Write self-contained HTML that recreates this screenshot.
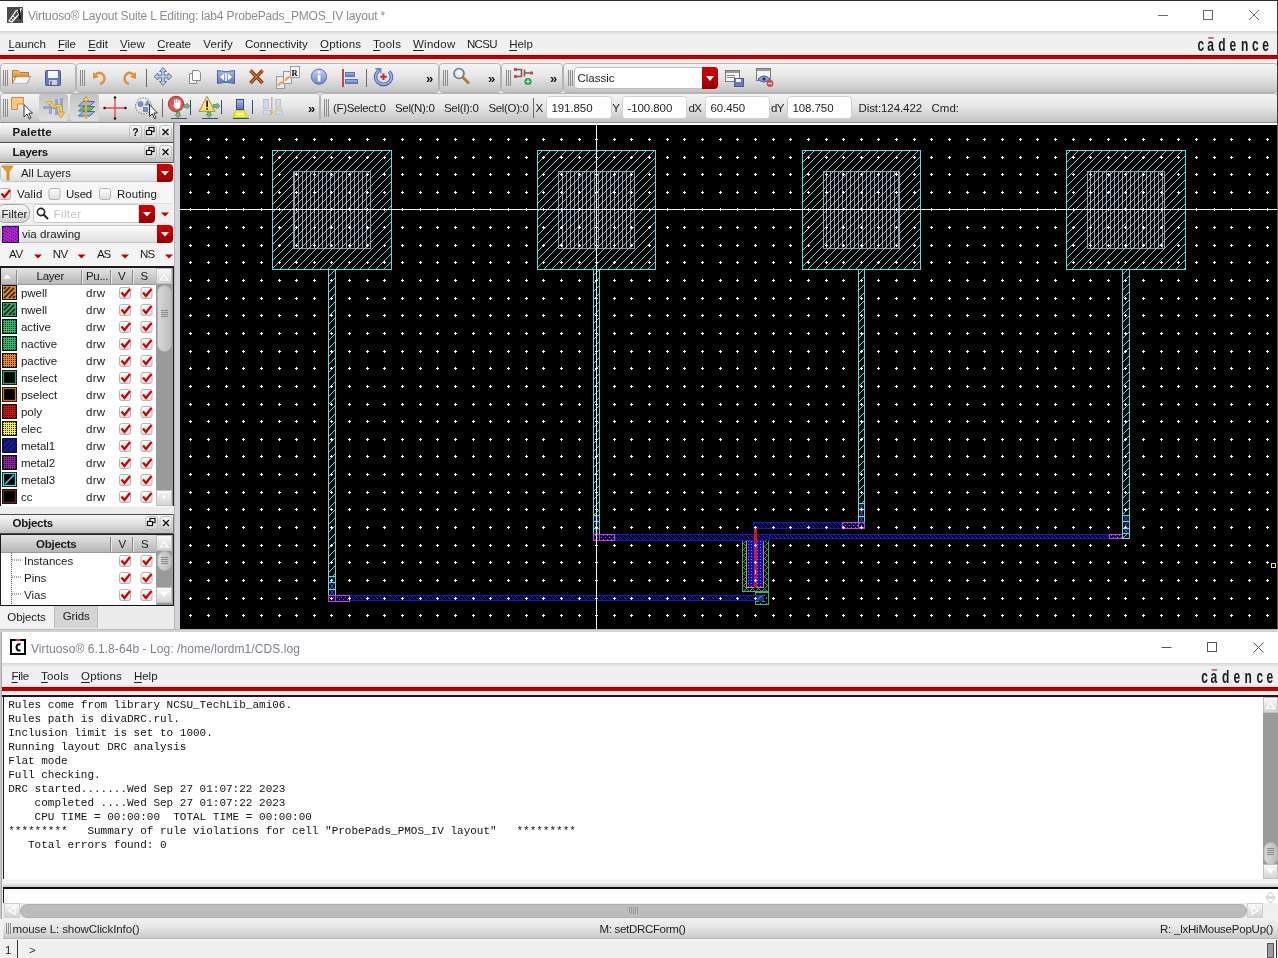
<!DOCTYPE html>
<html><head><meta charset="utf-8"><title>Virtuoso Layout</title>
<style>html,body{margin:0;padding:0;background:#f0f0f0;overflow:hidden;width:1278px;height:958px;font-family:"Liberation Sans",sans-serif}
svg{display:block;will-change:transform}</style></head>
<body><svg width="1278" height="958" viewBox="0 0 1278 958">
<defs>
<linearGradient id="gTB" x1="0" y1="0" x2="0" y2="1">
 <stop offset="0" stop-color="#f4f4f4"/><stop offset="0.45" stop-color="#e6e6e6"/><stop offset="1" stop-color="#c2c2c2"/>
</linearGradient>
<linearGradient id="gHdr" x1="0" y1="0" x2="0" y2="1">
 <stop offset="0" stop-color="#f8f8f8"/><stop offset="0.5" stop-color="#e2e2e2"/><stop offset="1" stop-color="#bdbdbd"/>
</linearGradient>
<linearGradient id="gTH" x1="0" y1="0" x2="0" y2="1">
 <stop offset="0" stop-color="#e4e4e4"/><stop offset="1" stop-color="#b4b4b4"/>
</linearGradient>
<linearGradient id="gCombo" x1="0" y1="0" x2="0" y2="1">
 <stop offset="0" stop-color="#fcfcfc"/><stop offset="1" stop-color="#dedede"/>
</linearGradient>
<linearGradient id="gRed" x1="0" y1="0" x2="0" y2="1">
 <stop offset="0" stop-color="#d40000"/><stop offset="1" stop-color="#960000"/>
</linearGradient>
<linearGradient id="gBtn" x1="0" y1="0" x2="0" y2="1">
 <stop offset="0" stop-color="#fafafa"/><stop offset="1" stop-color="#d2d2d2"/>
</linearGradient>
<linearGradient id="gScroll" x1="0" y1="0" x2="1" y2="0">
 <stop offset="0" stop-color="#d8d8d8"/><stop offset="1" stop-color="#bcbcbc"/>
</linearGradient>
<linearGradient id="gStat" x1="0" y1="0" x2="0" y2="1">
 <stop offset="0" stop-color="#f2f2f2"/><stop offset="0.5" stop-color="#e4e4e4"/><stop offset="1" stop-color="#c6c6c6"/>
</linearGradient>
<linearGradient id="gSplit" x1="0" y1="0" x2="0" y2="1">
 <stop offset="0" stop-color="#e8e8e8"/><stop offset="0.4" stop-color="#fafafa"/><stop offset="1" stop-color="#c8c8c8"/>
</linearGradient>
<linearGradient id="gCheck" x1="0" y1="0" x2="0" y2="1">
 <stop offset="0" stop-color="#ffffff"/><stop offset="1" stop-color="#dcdcdc"/>
</linearGradient>
</defs>
<rect x="0" y="0" width="1278" height="958" fill="#f0f0f0"/>
<rect x="0" y="0" width="1278" height="31" fill="#ffffff"/>
<rect x="0" y="0" width="1278" height="1" fill="#2a2a2a"/>
<rect x="0" y="31" width="1278" height="1" fill="#d6d6d6"/>
<g transform="translate(7,7)"><rect width="16" height="16" fill="#4a4a4a"/><path d="M2 14 L9 4 L14 2 L12 7 L5 15 Z" fill="none" stroke="#fff" stroke-width="1.3"/><path d="M6 9 l3 3 M4 11 l2 2 M10 5 l1 1" stroke="#fff" stroke-width="1"/><path d="M12 2 l1 10" stroke="#000" stroke-width="1.5"/></g>
<text x="28.00" y="20.00" font-family="Liberation Sans" font-size="12.00" fill="#8a8a96" letter-spacing="-0.165">Virtuoso® Layout Suite L Editing: lab4 ProbePads_PMOS_IV layout *</text>
<path d="M1158 15.5 H1168" stroke="#6a6a6a" stroke-width="1"/>
<rect x="1203.5" y="10.5" width="9" height="9" fill="none" stroke="#6a6a6a" stroke-width="1"/>
<path d="M1249 10 L1259 20 M1259 10 L1249 20" stroke="#6a6a6a" stroke-width="1"/>
<rect x="0" y="32" width="1278" height="22" fill="#f0f0f0"/>
<rect x="0" y="32" width="1278" height="2" fill="#e2e2e2"/>
<rect x="0" y="53" width="1278" height="2" fill="#fbe4e4"/>
<rect x="0" y="55" width="1278" height="1" fill="#9a0000"/>
<rect x="0" y="56" width="1278" height="3" fill="#c00000"/>
<rect x="0" y="59" width="1278" height="2" fill="#fbe4e4"/>
<text x="8.40" y="48.00" font-family="Liberation Sans" font-size="11.50" fill="#1e1e1e" letter-spacing="-0.055">Launch</text>
<rect x="8.4" y="50" width="5.8" height="1" fill="#1e1e1e"/>
<text x="58.00" y="48.00" font-family="Liberation Sans" font-size="11.50" fill="#1e1e1e" letter-spacing="-0.233">File</text>
<rect x="58.0" y="50" width="6.2" height="1" fill="#1e1e1e"/>
<text x="88.20" y="48.00" font-family="Liberation Sans" font-size="11.50" fill="#1e1e1e" letter-spacing="-0.029">Edit</text>
<rect x="88.2" y="50" width="7.1" height="1" fill="#1e1e1e"/>
<text x="120.00" y="48.00" font-family="Liberation Sans" font-size="11.50" fill="#1e1e1e" letter-spacing="0.045">View</text>
<rect x="120.0" y="50" width="7.2" height="1" fill="#1e1e1e"/>
<text x="157.30" y="48.00" font-family="Liberation Sans" font-size="11.50" fill="#1e1e1e" letter-spacing="-0.170">Create</text>
<rect x="157.3" y="50" width="7.6" height="1" fill="#1e1e1e"/>
<text x="203.20" y="48.00" font-family="Liberation Sans" font-size="11.50" fill="#1e1e1e" letter-spacing="0.173">Verify</text>
<rect x="221.1" y="50" width="4.0" height="1" fill="#1e1e1e"/>
<text x="245.00" y="48.00" font-family="Liberation Sans" font-size="11.50" fill="#1e1e1e" letter-spacing="0.013">Connectivity</text>
<rect x="259.7" y="50" width="5.9" height="1" fill="#1e1e1e"/>
<text x="320.00" y="48.00" font-family="Liberation Sans" font-size="11.50" fill="#1e1e1e" letter-spacing="0.238">Options</text>
<rect x="320.0" y="50" width="8.8" height="1" fill="#1e1e1e"/>
<text x="373.00" y="48.00" font-family="Liberation Sans" font-size="11.50" fill="#1e1e1e" letter-spacing="0.271">Tools</text>
<rect x="373.0" y="50" width="6.9" height="1" fill="#1e1e1e"/>
<text x="413.00" y="48.00" font-family="Liberation Sans" font-size="11.50" fill="#1e1e1e" letter-spacing="0.266">Window</text>
<rect x="413.0" y="50" width="10.8" height="1" fill="#1e1e1e"/>
<text x="467.00" y="48.00" font-family="Liberation Sans" font-size="11.50" fill="#1e1e1e" letter-spacing="-0.697">NCSU</text>
<text x="509.20" y="48.00" font-family="Liberation Sans" font-size="11.50" fill="#1e1e1e" letter-spacing="-0.013">Help</text>
<rect x="509.2" y="50" width="7.8" height="1" fill="#1e1e1e"/>
<text transform="translate(1197.50,50.60) scale(0.66,1)" font-family="Liberation Sans" font-weight="bold" font-size="18.2" fill="#1c1c1c">c</text>
<text transform="translate(1207.20,50.60) scale(0.66,1)" font-family="Liberation Sans" font-weight="bold" font-size="18.2" fill="#1c1c1c">a</text>
<text transform="translate(1218.20,50.60) scale(0.66,1)" font-family="Liberation Sans" font-weight="bold" font-size="18.2" fill="#1c1c1c">d</text>
<text transform="translate(1229.60,50.60) scale(0.66,1)" font-family="Liberation Sans" font-weight="bold" font-size="18.2" fill="#1c1c1c">e</text>
<text transform="translate(1240.90,50.60) scale(0.66,1)" font-family="Liberation Sans" font-weight="bold" font-size="18.2" fill="#1c1c1c">n</text>
<text transform="translate(1251.90,50.60) scale(0.66,1)" font-family="Liberation Sans" font-weight="bold" font-size="18.2" fill="#1c1c1c">c</text>
<text transform="translate(1262.30,50.60) scale(0.66,1)" font-family="Liberation Sans" font-weight="bold" font-size="18.2" fill="#1c1c1c">e</text>
<rect x="1208.2" y="37.2" width="5.5" height="1.4" fill="#b84848"/>
<rect x="0" y="61" width="1278" height="2" fill="#f0f0f0"/>
<rect x="0.5" y="63.5" width="75" height="29" rx="3" fill="url(#gTB)" stroke="#b4b4b4" stroke-width="1"/>
<rect x="76.5" y="63.5" width="362" height="29" rx="3" fill="url(#gTB)" stroke="#b4b4b4" stroke-width="1"/>
<rect x="439.5" y="63.5" width="61" height="29" rx="3" fill="url(#gTB)" stroke="#b4b4b4" stroke-width="1"/>
<rect x="501.5" y="63.5" width="61" height="29" rx="3" fill="url(#gTB)" stroke="#b4b4b4" stroke-width="1"/>
<rect x="563.5" y="63.5" width="714" height="29" rx="3" fill="url(#gTB)" stroke="#b4b4b4" stroke-width="1"/>
<path d="M3.5 70 V86" stroke="#8c8c8c" stroke-width="1"/>
<path d="M5.5 70 V86" stroke="#8c8c8c" stroke-width="1"/>
<path d="M7.5 70 V86" stroke="#8c8c8c" stroke-width="1"/>
<path d="M80.5 70 V86" stroke="#8c8c8c" stroke-width="1"/>
<path d="M82.5 70 V86" stroke="#8c8c8c" stroke-width="1"/>
<path d="M84.5 70 V86" stroke="#8c8c8c" stroke-width="1"/>
<path d="M443.5 70 V86" stroke="#8c8c8c" stroke-width="1"/>
<path d="M445.5 70 V86" stroke="#8c8c8c" stroke-width="1"/>
<path d="M447.5 70 V86" stroke="#8c8c8c" stroke-width="1"/>
<path d="M506.5 70 V86" stroke="#8c8c8c" stroke-width="1"/>
<path d="M508.5 70 V86" stroke="#8c8c8c" stroke-width="1"/>
<path d="M510.5 70 V86" stroke="#8c8c8c" stroke-width="1"/>
<path d="M568.5 70 V86" stroke="#8c8c8c" stroke-width="1"/>
<path d="M570.5 70 V86" stroke="#8c8c8c" stroke-width="1"/>
<path d="M572.5 70 V86" stroke="#8c8c8c" stroke-width="1"/>
<rect x="0.5" y="93.5" width="319" height="29" rx="3" fill="url(#gTB)" stroke="#b4b4b4" stroke-width="1"/>
<rect x="320.5" y="93.5" width="957" height="29" rx="3" fill="url(#gTB)" stroke="#b4b4b4" stroke-width="1"/>
<path d="M3.5 99 V117" stroke="#8c8c8c" stroke-width="1"/>
<path d="M5.5 99 V117" stroke="#8c8c8c" stroke-width="1"/>
<path d="M7.5 99 V117" stroke="#8c8c8c" stroke-width="1"/>
<path d="M324.5 99 V117" stroke="#8c8c8c" stroke-width="1"/>
<path d="M326.5 99 V117" stroke="#8c8c8c" stroke-width="1"/>
<path d="M328.5 99 V117" stroke="#8c8c8c" stroke-width="1"/>
<rect x="0" y="122" width="1278" height="1" fill="#8e8e8e"/>
<defs>
<linearGradient id="gFold" x1="0" y1="0" x2="0" y2="1"><stop offset="0" stop-color="#f6c27a"/><stop offset="1" stop-color="#d88a30"/></linearGradient>
<linearGradient id="gBlueI" x1="0" y1="0" x2="0" y2="1"><stop offset="0" stop-color="#c8d4f4"/><stop offset="1" stop-color="#6a80c8"/></linearGradient>
<linearGradient id="gBlueB" x1="0" y1="0" x2="0" y2="1"><stop offset="0" stop-color="#a8bce8"/><stop offset="1" stop-color="#5a74b8"/></linearGradient>
<linearGradient id="gWarn" x1="0" y1="0" x2="0" y2="1"><stop offset="0" stop-color="#fff8d0"/><stop offset="1" stop-color="#f0d860"/></linearGradient>
<linearGradient id="gHL" x1="0" y1="0" x2="0" y2="1"><stop offset="0" stop-color="#c4c4c4"/><stop offset="1" stop-color="#dedede"/></linearGradient>
</defs>
<path d="M12.5 70.5 H18 L20 72.5 H28.5 V77 H12.5 Z" fill="url(#gFold)" stroke="#c07a28" stroke-width="1"/>
<path d="M12.5 83.5 V72 M12.5 83.5 L16 76.5 H30.5 L27 83.5 Z" fill="#f8f8f8" stroke="#c07a28" stroke-width="1"/>
<path d="M13 83.5 L16.5 77 H30 L26.5 83.5 Z" fill="#f4f4f4" stroke="#bcbcbc" stroke-width="0.8"/>
<rect x="45.5" y="70.5" width="15" height="15" rx="1" fill="#6a7cb4" stroke="#4a5a90"/>
<rect x="48" y="71" width="10" height="7" fill="#f4f6fa"/>
<rect x="49" y="80" width="8" height="5" fill="#c8d0e4"/>
<rect x="50" y="81" width="2" height="4" fill="#6a7cb4"/>
<path d="M95 75 Q100 70 104 76 Q106 82 100 84" fill="none" stroke="#e09040" stroke-width="2.4"/>
<path d="M93 72 L93 79 L99 77 Z" fill="#e09040"/>
<path d="M134 75 Q129 70 125 76 Q123 82 129 84" fill="none" stroke="#e09040" stroke-width="2.4"/>
<path d="M136 72 L136 79 L130 77 Z" fill="#e09040"/>
<path d="M146.5 69 V87" stroke="#6a6a6a" stroke-width="1"/>
<path d="M163 67.5 L166.5 71.5 H164.3 V75.2 H168 V73 L172 76.5 L168 80 V77.8 H164.3 V81.5 H166.5 L163 85.5 L159.5 81.5 H161.7 V77.8 H158 V80 L154 76.5 L158 73 V75.2 H161.7 V71.5 H159.5 Z" fill="#b8d0ea" stroke="#5a7898" stroke-width="1"/>
<path d="M189.5 73.5 H196.5 V83.5 H189.5 Z" fill="#fafafa" stroke="#8a8a8a"/>
<path d="M192.5 70.5 H198.5 L200.5 72.5 V80.5 H192.5 Z" fill="#fafafa" stroke="#8a8a8a"/>
<path d="M217.5 70.5 Q226 73 234.5 70.5 V83.5 Q226 81 217.5 83.5 Z" fill="url(#gBlueB)" stroke="#4a64a8"/>
<path d="M224 73.5 L220 77 L224 80.5 Z M228 73.5 L232 77 L228 80.5 Z" fill="#fff"/>
<rect x="225" y="73" width="2" height="8" fill="#e8eef8"/>
<path d="M250.5 70.5 L262.5 83 M262.5 70.5 L250.5 83" stroke="#7a3410" stroke-width="3.4"/>
<path d="M250.5 70.5 L262.5 83 M262.5 70.5 L250.5 83" stroke="#d8702a" stroke-width="1.3"/>
<rect x="276.5" y="76.5" width="8" height="12" fill="#eaeaea" stroke="#9a9a9a"/>
<rect x="283.5" y="71.5" width="8" height="12" fill="#eeeeee" stroke="#9a9a9a"/>
<rect x="290.5" y="66.5" width="9" height="11" fill="#f6f6f6" stroke="#9a9a9a"/>
<path d="M278 86 Q280 82 284 82 M285 81 Q287 77 291 77" fill="none" stroke="#e8a050" stroke-width="1.8"/>
<text x="291.50" y="76.00" font-family="Liberation Serif" font-size="8.50" fill="#000" font-weight="bold">R</text>
<circle cx="319" cy="76.7" r="7.6" fill="url(#gBlueI)" stroke="#5a70b8" stroke-width="1"/>
<rect x="317.8" y="75" width="2.6" height="6.5" fill="#fff"/><circle cx="319.1" cy="72.4" r="1.4" fill="#fff"/>
<rect x="342" y="69" width="2" height="18" fill="#c04848"/>
<rect x="345.5" y="72.5" width="9" height="4" fill="url(#gBlueB)" stroke="#5a74b8" stroke-width="1"/>
<rect x="345.5" y="79.5" width="12" height="4" fill="url(#gBlueB)" stroke="#5a74b8" stroke-width="1"/>
<path d="M366.5 69 V87" stroke="#6a6a6a" stroke-width="1"/>
<path d="M378 71.5 A8 7.5 0 1 0 389 71.5" fill="none" stroke="#3a5aa8" stroke-width="3.6"/>
<path d="M378 71.5 A8 7.5 0 1 0 389 71.5" fill="none" stroke="#9ab4e8" stroke-width="1.8"/>
<path d="M374.5 68 H381.5 V74 Z" fill="#6a88d0"/>
<path d="M383.5 73.5 V80 M380.2 76.8 H386.8" stroke="#e02020" stroke-width="2"/>
<text x="426.00" y="83.00" font-family="Liberation Sans" font-size="13.00" fill="#111" font-weight="bold">»</text>
<circle cx="459" cy="73.5" r="5" fill="#dce8f8" stroke="#6a7890" stroke-width="1.6"/>
<path d="M456.5 73.5 H461.5 M459 71 V76" stroke="#fff" stroke-width="1.6"/>
<path d="M462.5 77 L469 83.5" stroke="#b0782a" stroke-width="2.6"/>
<text x="488.00" y="83.00" font-family="Liberation Sans" font-size="13.00" fill="#111" font-weight="bold">»</text>
<path d="M516 69.5 H521.5 V73.5 M516 76.5 H521.5 V72.5 M524.5 69.5 V76.5 M524.5 73 H531" fill="none" stroke="#7a5a5a" stroke-width="1.6"/>
<rect x="514" y="68" width="3" height="3" fill="#d04848"/><rect x="514" y="75" width="3" height="3" fill="#d04848"/><rect x="530" y="71.5" width="3" height="3" fill="#d04848"/>
<circle cx="528" cy="81.5" r="3.6" fill="#28a040"/><path d="M526 81.5 H530 M528 79.5 V83.5" stroke="#fff" stroke-width="1.2"/>
<text x="550.00" y="83.00" font-family="Liberation Sans" font-size="13.00" fill="#111" font-weight="bold">»</text>
<rect x="725.5" y="70.5" width="14" height="11" fill="#f4f4f4" stroke="#7a7a7a"/>
<rect x="726" y="71" width="13" height="2" fill="#9a9a9a"/>
<rect x="727" y="75" width="8" height="1" fill="#8a8a8a"/>
<rect x="727" y="77" width="8" height="1" fill="#8a8a8a"/>
<rect x="734.5" y="78.5" width="9" height="8" fill="#6a7cb4" stroke="#4a5a90"/>
<rect x="736" y="79" width="5" height="3" fill="#f0f0f0"/>
<rect x="756.5" y="68.5" width="14" height="12" fill="#f4f4f4" stroke="#7a7a7a"/>
<rect x="757" y="69" width="13" height="2" fill="#9a9a9a"/>
<path d="M758 79 Q764 73 770 79 Q764 85 758 79 Z" fill="#8aa0d8" stroke="#3a5aa8" stroke-width="1"/>
<circle cx="764" cy="79" r="1.6" fill="#203060"/>
<circle cx="770" cy="83.5" r="3.4" fill="#e04848"/><path d="M768.2 83.5 H771.8" stroke="#fff" stroke-width="1.2"/>
<path d="M11.5 97.5 H23.5 V104 H17.5 V109.5 H11.5 Z" fill="#f8c880" stroke="#d08a30" stroke-width="1"/>
<path d="M24 104.5 V117 L27 114 L29.5 119 L31 118 L28.8 113.2 H32.5 Z" fill="#fff" stroke="#222" stroke-width="0.9"/>
<rect x="39" y="94" width="29" height="27" rx="3" fill="url(#gHL)"/>
<rect x="70" y="94" width="29" height="27" rx="3" fill="url(#gHL)"/>
<path d="M43 107.5 H57" stroke="#8ea6d8" stroke-width="3"/>
<rect x="49" y="101" width="3" height="13" fill="#8ea6d8"/>
<rect x="55" y="99" width="3" height="16" fill="#8ea6d8"/>
<rect x="60" y="98" width="3" height="17" fill="#8ea6d8"/>
<path d="M47 104 Q49 101 51 104 Q53 108 57 106 Q61 104 61 109 V113" fill="none" stroke="#c89020" stroke-width="3.2"/>
<path d="M47 104 Q49 101 51 104 Q53 108 57 106 Q61 104 61 109 V113" fill="none" stroke="#f8d060" stroke-width="1.8"/>
<path d="M57.5 112 L61 118 L64.5 112 Z" fill="#f8d060" stroke="#c89020" stroke-width="0.8"/>
<path d="M78.5 106 L83 101.5 H94.5 L90 106 Z" fill="#9ab4e8" stroke="#4a64a8"/>
<path d="M78.5 111 L83 106.5 H94.5 L90 111 Z" fill="#6ab870" stroke="#3a8a48"/>
<path d="M78.5 116 L83 111.5 H94.5 L90 116 Z" fill="#9ab4e8" stroke="#4a64a8"/>
<path d="M86 99 V119" stroke="#c89020" stroke-width="2.2"/><path d="M86 99 V119" stroke="#f8d060" stroke-width="1"/>
<path d="M83 101 L86 96.5 L89 101 Z" fill="#f8d060" stroke="#c89020" stroke-width="0.8"/>
<path d="M104 108 H126 M115 97 V119" stroke="#e84848" stroke-width="1.4"/>
<circle cx="104.5" cy="108" r="1.2" fill="#111"/>
<circle cx="125.5" cy="108" r="1.2" fill="#111"/>
<circle cx="115" cy="97.5" r="1.2" fill="#111"/>
<circle cx="115" cy="118.5" r="1.2" fill="#111"/>
<circle cx="143.5" cy="106" r="8" fill="none" stroke="#777" stroke-width="1" stroke-dasharray="1.6 1.2"/>
<circle cx="140.5" cy="104" r="2.6" fill="#7a94d8" stroke="#4a64a8" stroke-width="0.6"/>
<path d="M145 105 L147.5 100.5 L150 105 Z" fill="#7a94d8" stroke="#4a64a8" stroke-width="0.6"/>
<rect x="143.5" y="107.5" width="4" height="4" fill="#7a94d8" stroke="#4a64a8" stroke-width="0.6"/>
<path d="M149.5 104.5 V116.5 L152.3 113.8 L154.5 118.8 L156 118 L153.8 113 H157.3 Z" fill="#fff" stroke="#222" stroke-width="0.9"/>
<path d="M162.5 99 V117" stroke="#6a6a6a" stroke-width="1"/>
<circle cx="176" cy="104" r="7.6" fill="#d45a5a" stroke="#b84040" stroke-width="1.2"/>
<path d="M174.6 103 V100.2 M176.4 103 V99.4 M178.2 103 V99.8 M179.8 103.5 V101" stroke="#fff" stroke-width="1.3" stroke-linecap="round" fill="none"/>
<path d="M172.8 104.2 L174.2 106 V103 H180.4 V106 Q180.2 109 177 109 Q174.4 109 172.8 104.2 Z" fill="#fff"/>
<path d="M184 104.5 H187 V103 L190 106 L187 109 V107.5 H184 Z" fill="#6ac070" stroke="#3a8a48" stroke-width="0.6"/>
<path d="M176.5 112 V115 H175 L178 118 L181 115 H179.5 V112 Z" fill="#6ac070" stroke="#3a8a48" stroke-width="0.6"/>
<rect x="171" y="118" width="16" height="1" fill="#3a4a78"/>
<rect x="190" y="100" width="1" height="15" fill="#3a4a78"/>
<path d="M207 96.5 L215 111.5 H199 Z" fill="url(#gWarn)" stroke="#c8904a" stroke-width="1.1" stroke-linejoin="round"/>
<rect x="206.3" y="100.5" width="1.6" height="6.5" fill="#111"/>
<rect x="206.3" y="108.2" width="1.6" height="1.6" fill="#111"/>
<path d="M213 104.5 H217 V103 L220 106 L217 109 V107.5 H213 Z" fill="#6ac070" stroke="#3a8a48" stroke-width="0.6"/>
<path d="M207.5 112 V114.5 H206 L209 117.5 L212 114.5 H210.5 V112 Z" fill="#6ac070" stroke="#3a8a48" stroke-width="0.6"/>
<rect x="202" y="118" width="16" height="1" fill="#3a4a78"/>
<rect x="221" y="100" width="1" height="14" fill="#3a4a78"/>
<rect x="236.5" y="99.5" width="7" height="10" fill="url(#gBlueB)" stroke="#3a4a88"/>
<path d="M235.5 110.5 H244.5 L247 117.5 H233 Z" fill="#f0f030" stroke="#c8c020" stroke-width="0.8"/>
<rect x="237" y="113" width="6" height="2" fill="#f8f8b8"/>
<rect x="233" y="118" width="16" height="1" fill="#3a4a78"/>
<rect x="252" y="100" width="1" height="14" fill="#3a4a78"/>
<rect x="263.5" y="99.5" width="5" height="9" fill="#d0d8e8" stroke="#b8c4d8"/><rect x="275.5" y="99.5" width="5" height="9" fill="#d0d8e8" stroke="#b8c4d8"/>
<rect x="263.5" y="110.5" width="7" height="4" fill="#d0d8e8" stroke="#b8c4d8"/><rect x="275.5" y="110.5" width="7" height="4" fill="#d0d8e8" stroke="#b8c4d8"/>
<rect x="271" y="97" width="1.5" height="20" fill="#d8a8a8"/>
<path d="M270 118 L281 106" stroke="#c8a878" stroke-width="2.4"/><path d="M270 118 L281 106" stroke="#f0e0b8" stroke-width="1.2"/>
<text x="308.00" y="113.00" font-family="Liberation Sans" font-size="13.00" fill="#111" font-weight="bold">»</text>
<text x="333.00" y="112.00" font-family="Liberation Sans" font-size="11.50" fill="#1e1e1e" letter-spacing="-0.340">(F)Select:0</text>
<text x="395.00" y="112.00" font-family="Liberation Sans" font-size="11.50" fill="#1e1e1e" letter-spacing="-0.335">Sel(N):0</text>
<text x="444.00" y="112.00" font-family="Liberation Sans" font-size="11.50" fill="#1e1e1e" letter-spacing="-0.321">Sel(I):0</text>
<text x="488.50" y="112.00" font-family="Liberation Sans" font-size="11.50" fill="#1e1e1e" letter-spacing="-0.352">Sel(O):0</text>
<text x="535.50" y="112.00" font-family="Liberation Sans" font-size="11.50" fill="#1e1e1e">X</text>
<text x="612.20" y="112.00" font-family="Liberation Sans" font-size="11.50" fill="#1e1e1e">Y</text>
<text x="688.50" y="112.00" font-family="Liberation Sans" font-size="11.50" fill="#1e1e1e" letter-spacing="-0.533">dX</text>
<text x="771.00" y="112.00" font-family="Liberation Sans" font-size="11.50" fill="#1e1e1e" letter-spacing="-0.533">dY</text>
<text x="858.50" y="112.00" font-family="Liberation Sans" font-size="11.50" fill="#1e1e1e" letter-spacing="-0.089">Dist:124.422</text>
<text x="931.50" y="112.00" font-family="Liberation Sans" font-size="11.50" fill="#1e1e1e" letter-spacing="0.006">Cmd:</text>
<path d="M533.5 98 V118" stroke="#6a6a6a" stroke-width="1"/>
<rect x="546.5" y="96.5" width="65" height="22" rx="3" fill="#ffffff" stroke="#cfcfcf"/>
<text x="551.50" y="112.00" font-family="Liberation Sans" font-size="11.50" fill="#1e1e1e" letter-spacing="-0.089">191.850</text>
<rect x="622.5" y="96.5" width="64" height="22" rx="3" fill="#ffffff" stroke="#cfcfcf"/>
<text x="627.50" y="112.00" font-family="Liberation Sans" font-size="11.50" fill="#1e1e1e" letter-spacing="-0.085">-100.800</text>
<rect x="705.5" y="96.5" width="64" height="22" rx="3" fill="#ffffff" stroke="#cfcfcf"/>
<text x="710.50" y="112.00" font-family="Liberation Sans" font-size="11.50" fill="#1e1e1e" letter-spacing="-0.088">60.450</text>
<rect x="787.5" y="96.5" width="64" height="22" rx="3" fill="#ffffff" stroke="#cfcfcf"/>
<text x="792.50" y="112.00" font-family="Liberation Sans" font-size="11.50" fill="#1e1e1e" letter-spacing="-0.089">108.750</text>
<rect x="574.5" y="67.5" width="143" height="21" rx="3" fill="#ffffff" stroke="#bdbdbd"/>
<path d="M702 67 H714 Q718 67 718 71 V85 Q718 89 714 89 H702 Z" fill="url(#gRed)"/>
<path d="M706 76 L714 76 L710 81 Z" fill="#fff"/>
<text x="577.50" y="82.00" font-family="Liberation Sans" font-size="11.50" fill="#1e1e1e" letter-spacing="-0.009">Classic</text>
<rect x="0" y="123" width="174" height="506" fill="#f0f0f0"/>
<rect x="0" y="123" width="173" height="1" fill="#6a6a6a"/>
<rect x="0" y="123" width="173" height="19" fill="url(#gHdr)"/>
<rect x="0" y="142" width="173" height="1" fill="#4a4a4a"/>
<rect x="173" y="123" width="1" height="20" fill="#7a7a7a"/>
<text x="12.50" y="136.00" font-family="Liberation Sans" font-size="11.50" fill="#111" font-weight="bold" letter-spacing="0.255">Palette</text>
<rect x="129.5" y="125.5" width="12" height="13" rx="3" fill="url(#gBtn)" stroke="#bdbdbd"/>
<text x="135.50" y="136.00" font-family="Liberation Sans" font-size="10.50" fill="#111" font-weight="bold" text-anchor="middle">?</text>
<rect x="144.5" y="125.5" width="12" height="13" rx="3" fill="url(#gBtn)" stroke="#bdbdbd"/>
<rect x="149.0" y="127.5" width="5" height="4" fill="#fff" stroke="#111" stroke-width="1.2"/><rect x="146.5" y="130.5" width="5" height="4" fill="#fff" stroke="#111" stroke-width="1.2"/>
<rect x="159.5" y="125.5" width="12" height="13" rx="3" fill="url(#gBtn)" stroke="#bdbdbd"/>
<path d="M162.5 129.0 l6 6 M162.5 135.0 l6 -6" stroke="#111" stroke-width="1.4"/>
<rect x="0" y="143" width="173" height="19" fill="url(#gHdr)"/>
<rect x="0" y="162" width="173" height="1" fill="#4a4a4a"/>
<rect x="173" y="143" width="1" height="20" fill="#7a7a7a"/>
<text x="12.50" y="156.00" font-family="Liberation Sans" font-size="11.50" fill="#111" font-weight="bold" letter-spacing="-0.264">Layers</text>
<rect x="144.5" y="145.5" width="12" height="13" rx="3" fill="url(#gBtn)" stroke="#bdbdbd"/>
<rect x="149.0" y="147.5" width="5" height="4" fill="#fff" stroke="#111" stroke-width="1.2"/><rect x="146.5" y="150.5" width="5" height="4" fill="#fff" stroke="#111" stroke-width="1.2"/>
<rect x="159.5" y="145.5" width="12" height="13" rx="3" fill="url(#gBtn)" stroke="#bdbdbd"/>
<path d="M162.5 149.0 l6 6 M162.5 155.0 l6 -6" stroke="#111" stroke-width="1.4"/>
<rect x="0" y="163" width="173" height="21" fill="#f4f4f4"/>
<rect x="0.5" y="164.5" width="172.0" height="17.0" rx="4" fill="url(#gCombo)" stroke="#c4c4c4"/>
<path d="M157.0 164.0 H169.0 Q173.0 164.0 173.0 168.0 V178.0 Q173.0 182.0 169.0 182.0 H157.0 Z" fill="url(#gRed)"/>
<path d="M161.0 171.0 h8 l-4 4.5 z" fill="#fff"/>
<path d="M2 166 H13 L9 172 V180 H7 V172 Z" fill="#e89a20" stroke="#b06a10" stroke-width="0.6"/>
<text x="21.00" y="177.20" font-family="Liberation Sans" font-size="11.50" fill="#1e1e1e" letter-spacing="-0.049">All Layers</text>
<rect x="0" y="183" width="173" height="21" fill="#f6f6f6"/>
<rect x="0" y="203" width="173" height="1" fill="#dedede"/>
<rect x="-0.5" y="188.5" width="11" height="11" rx="2" fill="url(#gCheck)" stroke="#b4b4b4"/>
<path d="M1.5 193.5 l3 3.5 l5.5 -7" fill="none" stroke="#cc0000" stroke-width="2.2"/>
<text x="17.00" y="198.00" font-family="Liberation Sans" font-size="11.50" fill="#1a1a1a" letter-spacing="0.156">Valid</text>
<rect x="49.0" y="188.5" width="11" height="11" rx="2" fill="url(#gCheck)" stroke="#b4b4b4"/>
<text x="66.00" y="198.00" font-family="Liberation Sans" font-size="11.50" fill="#1a1a1a" letter-spacing="-0.212">Used</text>
<rect x="99.5" y="188.5" width="11" height="11" rx="2" fill="url(#gCheck)" stroke="#b4b4b4"/>
<text x="117.00" y="198.00" font-family="Liberation Sans" font-size="11.50" fill="#1a1a1a" letter-spacing="0.052">Routing</text>
<rect x="-3.5" y="204.5" width="33" height="18" rx="8" fill="url(#gBtn)" stroke="#a8a8a8"/>
<text x="1.50" y="218.00" font-family="Liberation Sans" font-size="11.50" fill="#1a1a1a" letter-spacing="0.074">Filter</text>
<path d="M33.5 207.5 Q33.5 204.5 36.5 204.5 H139 V222.5 H36.5 Q33.5 222.5 33.5 219.5 Z" fill="#fff" stroke="#c8c8c8"/>
<path d="M139 205 H151 Q155 205 155 209 V219 Q155 223 151 223 H139 Z" fill="url(#gRed)"/>
<path d="M143 212 h8 l-4 4.5 z" fill="#fff"/>
<circle cx="41" cy="212" r="3.6" fill="none" stroke="#222" stroke-width="1.6"/><path d="M43.5 214.5 L48 219" stroke="#222" stroke-width="2"/>
<text x="53.50" y="218.00" font-family="Liberation Sans" font-size="11.50" fill="#c4c4c4" letter-spacing="0.407">Filter</text>
<path d="M161 212.5 h8 l-4 4 z" fill="#c00000"/>
<rect x="0" y="224" width="173" height="20" fill="#f0f0f0"/>
<rect x="0.5" y="225.5" width="172.0" height="17.0" rx="4" fill="url(#gCombo)" stroke="#c4c4c4"/>
<path d="M157.0 225.0 H169.0 Q173.0 225.0 173.0 229.0 V239.0 Q173.0 243.0 169.0 243.0 H157.0 Z" fill="url(#gRed)"/>
<path d="M161.0 232.0 h8 l-4 4.5 z" fill="#fff"/>
<rect x="2" y="226" width="17" height="17" fill="#1a1a50"/>
<rect x="3" y="227" width="15" height="15" fill="#b020d0"/>
<path d="M3 227h1v1h-1zM9 227h1v1h-1zM15 227h1v1h-1zM5 228h1v1h-1zM11 228h1v1h-1zM17 228h1v1h-1zM7 229h1v1h-1zM13 229h1v1h-1zM3 230h1v1h-1zM9 230h1v1h-1zM15 230h1v1h-1zM5 231h1v1h-1zM11 231h1v1h-1zM17 231h1v1h-1zM7 232h1v1h-1zM13 232h1v1h-1zM3 233h1v1h-1zM9 233h1v1h-1zM15 233h1v1h-1zM5 234h1v1h-1zM11 234h1v1h-1zM17 234h1v1h-1zM7 235h1v1h-1zM13 235h1v1h-1zM3 236h1v1h-1zM9 236h1v1h-1zM15 236h1v1h-1zM5 237h1v1h-1zM11 237h1v1h-1zM17 237h1v1h-1zM7 238h1v1h-1zM13 238h1v1h-1zM3 239h1v1h-1zM9 239h1v1h-1zM15 239h1v1h-1zM5 240h1v1h-1zM11 240h1v1h-1zM17 240h1v1h-1zM7 241h1v1h-1zM13 241h1v1h-1z" fill="#4a0860"/>
<text x="22.00" y="238.00" font-family="Liberation Sans" font-size="11.50" fill="#1a1a1a" letter-spacing="0.030">via drawing</text>
<rect x="0" y="244" width="173" height="22" fill="#f4f4f4"/>
<text x="9.00" y="258.00" font-family="Liberation Sans" font-size="11.50" fill="#1a1a1a" letter-spacing="-0.244">AV</text>
<path d="M34.0 254.5 h8 l-4 4 z" fill="#c00000"/>
<text x="52.80" y="258.00" font-family="Liberation Sans" font-size="11.50" fill="#1a1a1a" letter-spacing="-0.488">NV</text>
<path d="M77.5 254.5 h8 l-4 4 z" fill="#c00000"/>
<text x="97.00" y="258.00" font-family="Liberation Sans" font-size="11.50" fill="#1a1a1a" letter-spacing="-1.171">AS</text>
<path d="M121.0 254.5 h8 l-4 4 z" fill="#c00000"/>
<text x="140.00" y="258.00" font-family="Liberation Sans" font-size="11.50" fill="#1a1a1a" letter-spacing="-0.738">NS</text>
<path d="M165.0 254.5 h8 l-4 4 z" fill="#c00000"/>
<rect x="0" y="266" width="174" height="241" fill="#1c1c1c"/>
<rect x="1" y="268" width="155" height="238" fill="#ffffff"/>
<rect x="1" y="268" width="155" height="17" fill="url(#gTH)"/>
<rect x="1" y="284" width="155" height="1" fill="#9a9a9a"/>
<rect x="16" y="270" width="1" height="14" fill="#8a8a8a"/>
<rect x="17" y="270" width="1" height="14" fill="#e8e8e8"/>
<rect x="81" y="270" width="1" height="14" fill="#8a8a8a"/>
<rect x="82" y="270" width="1" height="14" fill="#e8e8e8"/>
<rect x="110" y="270" width="1" height="14" fill="#8a8a8a"/>
<rect x="111" y="270" width="1" height="14" fill="#e8e8e8"/>
<rect x="132" y="270" width="1" height="14" fill="#8a8a8a"/>
<rect x="133" y="270" width="1" height="14" fill="#e8e8e8"/>
<path d="M3 278.5 L7 274.5 L11 278.5 Z" fill="#fff"/>
<text x="36.50" y="280.00" font-family="Liberation Sans" font-size="11.50" fill="#1a1a1a" letter-spacing="-0.254">Layer</text>
<text x="86.00" y="280.00" font-family="Liberation Sans" font-size="11.50" fill="#1a1a1a" letter-spacing="-0.330">Pu...</text>
<text x="118.00" y="280.00" font-family="Liberation Sans" font-size="11.50" fill="#1a1a1a">V</text>
<text x="140.50" y="280.00" font-family="Liberation Sans" font-size="11.50" fill="#1a1a1a">S</text>
<rect x="156" y="268" width="17" height="238" fill="#9a9a9a"/>
<rect x="156.5" y="268.5" width="15" height="15" fill="url(#gBtn)" stroke="#c0c0c0"/>
<path d="M160 280 L164 275 L168 280 Z" fill="none" stroke="#fff" stroke-width="1.2"/>
<rect x="157.5" y="285.5" width="14" height="66" rx="7" fill="url(#gScroll)" stroke="#b0b0b0"/>
<rect x="161" y="310" width="7" height="1" fill="#8a8a8a"/>
<rect x="161" y="312" width="7" height="1" fill="#8a8a8a"/>
<rect x="161" y="314" width="7" height="1" fill="#8a8a8a"/>
<rect x="161" y="316" width="7" height="1" fill="#8a8a8a"/>
<rect x="156.5" y="490.5" width="15" height="15" fill="url(#gBtn)" stroke="#c0c0c0"/>
<path d="M160 495 L164 500 L168 495 Z" fill="#fff" stroke="#e0e0e0" stroke-width="1"/>
<rect x="2" y="285" width="15" height="15" fill="#111"/>
<rect x="3" y="286" width="13" height="13" fill="#e08a30"/>
<path d="M4 298 l10 -10 M4 293 l6 -6 M9 298 l6 -6 M4 289 l2 -2 M13 298 l2 -2" stroke="#1a1a1a" stroke-width="1.6"/>
<text x="21.00" y="296.50" font-family="Liberation Sans" font-size="11.50" fill="#1a1a1a" letter-spacing="-0.052">pwell</text>
<text x="86.00" y="296.50" font-family="Liberation Sans" font-size="11.50" fill="#1a1a1a" letter-spacing="0.323">drw</text>
<rect x="119.5" y="287.5" width="11" height="11" rx="2" fill="url(#gCheck)" stroke="#b4b4b4"/>
<path d="M121.5 292.5 l3 3.5 l5.5 -7" fill="none" stroke="#cc0000" stroke-width="2.2"/>
<rect x="141.0" y="287.5" width="11" height="11" rx="2" fill="url(#gCheck)" stroke="#b4b4b4"/>
<path d="M143.0 292.5 l3 3.5 l5.5 -7" fill="none" stroke="#cc0000" stroke-width="2.2"/>
<rect x="2" y="302" width="15" height="15" fill="#111"/>
<rect x="3" y="303" width="13" height="13" fill="#30a860"/>
<path d="M4 315 l10 -10 M4 310 l6 -6 M9 315 l6 -6 M4 306 l2 -2 M13 315 l2 -2" stroke="#1a1a1a" stroke-width="1.6"/>
<text x="21.00" y="313.50" font-family="Liberation Sans" font-size="11.50" fill="#1a1a1a" letter-spacing="-0.052">nwell</text>
<text x="86.00" y="313.50" font-family="Liberation Sans" font-size="11.50" fill="#1a1a1a" letter-spacing="0.323">drw</text>
<rect x="119.5" y="304.5" width="11" height="11" rx="2" fill="url(#gCheck)" stroke="#b4b4b4"/>
<path d="M121.5 309.5 l3 3.5 l5.5 -7" fill="none" stroke="#cc0000" stroke-width="2.2"/>
<rect x="141.0" y="304.5" width="11" height="11" rx="2" fill="url(#gCheck)" stroke="#b4b4b4"/>
<path d="M143.0 309.5 l3 3.5 l5.5 -7" fill="none" stroke="#cc0000" stroke-width="2.2"/>
<rect x="2" y="319" width="15" height="15" fill="#111"/>
<rect x="3" y="320" width="13" height="13" fill="#30b868"/>
<path d="M3 320h1v1h-1zM5 320h1v1h-1zM7 320h1v1h-1zM9 320h1v1h-1zM11 320h1v1h-1zM13 320h1v1h-1zM15 320h1v1h-1zM3 322h1v1h-1zM5 322h1v1h-1zM7 322h1v1h-1zM9 322h1v1h-1zM11 322h1v1h-1zM13 322h1v1h-1zM15 322h1v1h-1zM3 324h1v1h-1zM5 324h1v1h-1zM7 324h1v1h-1zM9 324h1v1h-1zM11 324h1v1h-1zM13 324h1v1h-1zM15 324h1v1h-1zM3 326h1v1h-1zM5 326h1v1h-1zM7 326h1v1h-1zM9 326h1v1h-1zM11 326h1v1h-1zM13 326h1v1h-1zM15 326h1v1h-1zM3 328h1v1h-1zM5 328h1v1h-1zM7 328h1v1h-1zM9 328h1v1h-1zM11 328h1v1h-1zM13 328h1v1h-1zM15 328h1v1h-1zM3 330h1v1h-1zM5 330h1v1h-1zM7 330h1v1h-1zM9 330h1v1h-1zM11 330h1v1h-1zM13 330h1v1h-1zM15 330h1v1h-1zM3 332h1v1h-1zM5 332h1v1h-1zM7 332h1v1h-1zM9 332h1v1h-1zM11 332h1v1h-1zM13 332h1v1h-1zM15 332h1v1h-1z" fill="#0a3a1a"/>
<text x="21.00" y="330.50" font-family="Liberation Sans" font-size="11.50" fill="#1a1a1a" letter-spacing="-0.050">active</text>
<text x="86.00" y="330.50" font-family="Liberation Sans" font-size="11.50" fill="#1a1a1a" letter-spacing="0.323">drw</text>
<rect x="119.5" y="321.5" width="11" height="11" rx="2" fill="url(#gCheck)" stroke="#b4b4b4"/>
<path d="M121.5 326.5 l3 3.5 l5.5 -7" fill="none" stroke="#cc0000" stroke-width="2.2"/>
<rect x="141.0" y="321.5" width="11" height="11" rx="2" fill="url(#gCheck)" stroke="#b4b4b4"/>
<path d="M143.0 326.5 l3 3.5 l5.5 -7" fill="none" stroke="#cc0000" stroke-width="2.2"/>
<rect x="2" y="336" width="15" height="15" fill="#111"/>
<rect x="3" y="337" width="13" height="13" fill="#30b868"/>
<path d="M3 337h1v1h-1zM5 337h1v1h-1zM7 337h1v1h-1zM9 337h1v1h-1zM11 337h1v1h-1zM13 337h1v1h-1zM15 337h1v1h-1zM3 339h1v1h-1zM5 339h1v1h-1zM7 339h1v1h-1zM9 339h1v1h-1zM11 339h1v1h-1zM13 339h1v1h-1zM15 339h1v1h-1zM3 341h1v1h-1zM5 341h1v1h-1zM7 341h1v1h-1zM9 341h1v1h-1zM11 341h1v1h-1zM13 341h1v1h-1zM15 341h1v1h-1zM3 343h1v1h-1zM5 343h1v1h-1zM7 343h1v1h-1zM9 343h1v1h-1zM11 343h1v1h-1zM13 343h1v1h-1zM15 343h1v1h-1zM3 345h1v1h-1zM5 345h1v1h-1zM7 345h1v1h-1zM9 345h1v1h-1zM11 345h1v1h-1zM13 345h1v1h-1zM15 345h1v1h-1zM3 347h1v1h-1zM5 347h1v1h-1zM7 347h1v1h-1zM9 347h1v1h-1zM11 347h1v1h-1zM13 347h1v1h-1zM15 347h1v1h-1zM3 349h1v1h-1zM5 349h1v1h-1zM7 349h1v1h-1zM9 349h1v1h-1zM11 349h1v1h-1zM13 349h1v1h-1zM15 349h1v1h-1z" fill="#0a3a1a"/>
<text x="21.00" y="347.50" font-family="Liberation Sans" font-size="11.50" fill="#1a1a1a" letter-spacing="-0.052">nactive</text>
<text x="86.00" y="347.50" font-family="Liberation Sans" font-size="11.50" fill="#1a1a1a" letter-spacing="0.323">drw</text>
<rect x="119.5" y="338.5" width="11" height="11" rx="2" fill="url(#gCheck)" stroke="#b4b4b4"/>
<path d="M121.5 343.5 l3 3.5 l5.5 -7" fill="none" stroke="#cc0000" stroke-width="2.2"/>
<rect x="141.0" y="338.5" width="11" height="11" rx="2" fill="url(#gCheck)" stroke="#b4b4b4"/>
<path d="M143.0 343.5 l3 3.5 l5.5 -7" fill="none" stroke="#cc0000" stroke-width="2.2"/>
<rect x="2" y="353" width="15" height="15" fill="#111"/>
<rect x="3" y="354" width="13" height="13" fill="#e88a30"/>
<path d="M3 354h1v1h-1zM5 354h1v1h-1zM7 354h1v1h-1zM9 354h1v1h-1zM11 354h1v1h-1zM13 354h1v1h-1zM15 354h1v1h-1zM3 356h1v1h-1zM5 356h1v1h-1zM7 356h1v1h-1zM9 356h1v1h-1zM11 356h1v1h-1zM13 356h1v1h-1zM15 356h1v1h-1zM3 358h1v1h-1zM5 358h1v1h-1zM7 358h1v1h-1zM9 358h1v1h-1zM11 358h1v1h-1zM13 358h1v1h-1zM15 358h1v1h-1zM3 360h1v1h-1zM5 360h1v1h-1zM7 360h1v1h-1zM9 360h1v1h-1zM11 360h1v1h-1zM13 360h1v1h-1zM15 360h1v1h-1zM3 362h1v1h-1zM5 362h1v1h-1zM7 362h1v1h-1zM9 362h1v1h-1zM11 362h1v1h-1zM13 362h1v1h-1zM15 362h1v1h-1zM3 364h1v1h-1zM5 364h1v1h-1zM7 364h1v1h-1zM9 364h1v1h-1zM11 364h1v1h-1zM13 364h1v1h-1zM15 364h1v1h-1zM3 366h1v1h-1zM5 366h1v1h-1zM7 366h1v1h-1zM9 366h1v1h-1zM11 366h1v1h-1zM13 366h1v1h-1zM15 366h1v1h-1z" fill="#4a2000"/>
<text x="21.00" y="364.50" font-family="Liberation Sans" font-size="11.50" fill="#1a1a1a" letter-spacing="-0.052">pactive</text>
<text x="86.00" y="364.50" font-family="Liberation Sans" font-size="11.50" fill="#1a1a1a" letter-spacing="0.323">drw</text>
<rect x="119.5" y="355.5" width="11" height="11" rx="2" fill="url(#gCheck)" stroke="#b4b4b4"/>
<path d="M121.5 360.5 l3 3.5 l5.5 -7" fill="none" stroke="#cc0000" stroke-width="2.2"/>
<rect x="141.0" y="355.5" width="11" height="11" rx="2" fill="url(#gCheck)" stroke="#b4b4b4"/>
<path d="M143.0 360.5 l3 3.5 l5.5 -7" fill="none" stroke="#cc0000" stroke-width="2.2"/>
<rect x="2" y="370" width="15" height="15" fill="#111"/>
<rect x="3.5" y="371.5" width="12" height="12" fill="#000" stroke="#30a060" stroke-width="1.3"/>
<text x="21.00" y="381.50" font-family="Liberation Sans" font-size="11.50" fill="#1a1a1a" letter-spacing="-0.052">nselect</text>
<text x="86.00" y="381.50" font-family="Liberation Sans" font-size="11.50" fill="#1a1a1a" letter-spacing="0.323">drw</text>
<rect x="119.5" y="372.5" width="11" height="11" rx="2" fill="url(#gCheck)" stroke="#b4b4b4"/>
<path d="M121.5 377.5 l3 3.5 l5.5 -7" fill="none" stroke="#cc0000" stroke-width="2.2"/>
<rect x="141.0" y="372.5" width="11" height="11" rx="2" fill="url(#gCheck)" stroke="#b4b4b4"/>
<path d="M143.0 377.5 l3 3.5 l5.5 -7" fill="none" stroke="#cc0000" stroke-width="2.2"/>
<rect x="2" y="387" width="15" height="15" fill="#111"/>
<rect x="3.5" y="388.5" width="12" height="12" fill="#000" stroke="#d07030" stroke-width="1.3"/>
<text x="21.00" y="398.50" font-family="Liberation Sans" font-size="11.50" fill="#1a1a1a" letter-spacing="-0.052">pselect</text>
<text x="86.00" y="398.50" font-family="Liberation Sans" font-size="11.50" fill="#1a1a1a" letter-spacing="0.323">drw</text>
<rect x="119.5" y="389.5" width="11" height="11" rx="2" fill="url(#gCheck)" stroke="#b4b4b4"/>
<path d="M121.5 394.5 l3 3.5 l5.5 -7" fill="none" stroke="#cc0000" stroke-width="2.2"/>
<rect x="141.0" y="389.5" width="11" height="11" rx="2" fill="url(#gCheck)" stroke="#b4b4b4"/>
<path d="M143.0 394.5 l3 3.5 l5.5 -7" fill="none" stroke="#cc0000" stroke-width="2.2"/>
<rect x="2" y="404" width="15" height="15" fill="#111"/>
<rect x="3" y="405" width="13" height="13" fill="#c01818"/>
<path d="M3 405h1v1h-1zM5 405h1v1h-1zM7 405h1v1h-1zM9 405h1v1h-1zM11 405h1v1h-1zM13 405h1v1h-1zM15 405h1v1h-1zM3 407h1v1h-1zM5 407h1v1h-1zM7 407h1v1h-1zM9 407h1v1h-1zM11 407h1v1h-1zM13 407h1v1h-1zM15 407h1v1h-1zM3 409h1v1h-1zM5 409h1v1h-1zM7 409h1v1h-1zM9 409h1v1h-1zM11 409h1v1h-1zM13 409h1v1h-1zM15 409h1v1h-1zM3 411h1v1h-1zM5 411h1v1h-1zM7 411h1v1h-1zM9 411h1v1h-1zM11 411h1v1h-1zM13 411h1v1h-1zM15 411h1v1h-1zM3 413h1v1h-1zM5 413h1v1h-1zM7 413h1v1h-1zM9 413h1v1h-1zM11 413h1v1h-1zM13 413h1v1h-1zM15 413h1v1h-1zM3 415h1v1h-1zM5 415h1v1h-1zM7 415h1v1h-1zM9 415h1v1h-1zM11 415h1v1h-1zM13 415h1v1h-1zM15 415h1v1h-1zM3 417h1v1h-1zM5 417h1v1h-1zM7 417h1v1h-1zM9 417h1v1h-1zM11 417h1v1h-1zM13 417h1v1h-1zM15 417h1v1h-1z" fill="#500000"/>
<text x="21.00" y="415.50" font-family="Liberation Sans" font-size="11.50" fill="#1a1a1a" letter-spacing="-0.053">poly</text>
<text x="86.00" y="415.50" font-family="Liberation Sans" font-size="11.50" fill="#1a1a1a" letter-spacing="0.323">drw</text>
<rect x="119.5" y="406.5" width="11" height="11" rx="2" fill="url(#gCheck)" stroke="#b4b4b4"/>
<path d="M121.5 411.5 l3 3.5 l5.5 -7" fill="none" stroke="#cc0000" stroke-width="2.2"/>
<rect x="141.0" y="406.5" width="11" height="11" rx="2" fill="url(#gCheck)" stroke="#b4b4b4"/>
<path d="M143.0 411.5 l3 3.5 l5.5 -7" fill="none" stroke="#cc0000" stroke-width="2.2"/>
<rect x="2" y="421" width="15" height="15" fill="#111"/>
<rect x="3" y="422" width="13" height="13" fill="#f0f040"/>
<path d="M3 422h1v1h-1zM5 422h1v1h-1zM7 422h1v1h-1zM9 422h1v1h-1zM11 422h1v1h-1zM13 422h1v1h-1zM15 422h1v1h-1zM3 424h1v1h-1zM5 424h1v1h-1zM7 424h1v1h-1zM9 424h1v1h-1zM11 424h1v1h-1zM13 424h1v1h-1zM15 424h1v1h-1zM3 426h1v1h-1zM5 426h1v1h-1zM7 426h1v1h-1zM9 426h1v1h-1zM11 426h1v1h-1zM13 426h1v1h-1zM15 426h1v1h-1zM3 428h1v1h-1zM5 428h1v1h-1zM7 428h1v1h-1zM9 428h1v1h-1zM11 428h1v1h-1zM13 428h1v1h-1zM15 428h1v1h-1zM3 430h1v1h-1zM5 430h1v1h-1zM7 430h1v1h-1zM9 430h1v1h-1zM11 430h1v1h-1zM13 430h1v1h-1zM15 430h1v1h-1zM3 432h1v1h-1zM5 432h1v1h-1zM7 432h1v1h-1zM9 432h1v1h-1zM11 432h1v1h-1zM13 432h1v1h-1zM15 432h1v1h-1zM3 434h1v1h-1zM5 434h1v1h-1zM7 434h1v1h-1zM9 434h1v1h-1zM11 434h1v1h-1zM13 434h1v1h-1zM15 434h1v1h-1z" fill="#222"/>
<text x="21.00" y="432.50" font-family="Liberation Sans" font-size="11.50" fill="#1a1a1a" letter-spacing="-0.053">elec</text>
<text x="86.00" y="432.50" font-family="Liberation Sans" font-size="11.50" fill="#1a1a1a" letter-spacing="0.323">drw</text>
<rect x="119.5" y="423.5" width="11" height="11" rx="2" fill="url(#gCheck)" stroke="#b4b4b4"/>
<path d="M121.5 428.5 l3 3.5 l5.5 -7" fill="none" stroke="#cc0000" stroke-width="2.2"/>
<rect x="141.0" y="423.5" width="11" height="11" rx="2" fill="url(#gCheck)" stroke="#b4b4b4"/>
<path d="M143.0 428.5 l3 3.5 l5.5 -7" fill="none" stroke="#cc0000" stroke-width="2.2"/>
<rect x="2" y="438" width="15" height="15" fill="#111"/>
<rect x="3" y="439" width="13" height="13" fill="#101078"/>
<path d="M4 451 l10 -10 M4 446 l6 -6 M9 451 l6 -6" stroke="#2a2aa0" stroke-width="1"/>
<text x="21.00" y="449.50" font-family="Liberation Sans" font-size="11.50" fill="#1a1a1a" letter-spacing="-0.058">metal1</text>
<text x="86.00" y="449.50" font-family="Liberation Sans" font-size="11.50" fill="#1a1a1a" letter-spacing="0.323">drw</text>
<rect x="119.5" y="440.5" width="11" height="11" rx="2" fill="url(#gCheck)" stroke="#b4b4b4"/>
<path d="M121.5 445.5 l3 3.5 l5.5 -7" fill="none" stroke="#cc0000" stroke-width="2.2"/>
<rect x="141.0" y="440.5" width="11" height="11" rx="2" fill="url(#gCheck)" stroke="#b4b4b4"/>
<path d="M143.0 445.5 l3 3.5 l5.5 -7" fill="none" stroke="#cc0000" stroke-width="2.2"/>
<rect x="2" y="455" width="15" height="15" fill="#111"/>
<rect x="3" y="456" width="13" height="13" fill="#9020a8"/>
<path d="M3 456h1v1h-1zM5 456h1v1h-1zM7 456h1v1h-1zM9 456h1v1h-1zM11 456h1v1h-1zM13 456h1v1h-1zM15 456h1v1h-1zM3 458h1v1h-1zM5 458h1v1h-1zM7 458h1v1h-1zM9 458h1v1h-1zM11 458h1v1h-1zM13 458h1v1h-1zM15 458h1v1h-1zM3 460h1v1h-1zM5 460h1v1h-1zM7 460h1v1h-1zM9 460h1v1h-1zM11 460h1v1h-1zM13 460h1v1h-1zM15 460h1v1h-1zM3 462h1v1h-1zM5 462h1v1h-1zM7 462h1v1h-1zM9 462h1v1h-1zM11 462h1v1h-1zM13 462h1v1h-1zM15 462h1v1h-1zM3 464h1v1h-1zM5 464h1v1h-1zM7 464h1v1h-1zM9 464h1v1h-1zM11 464h1v1h-1zM13 464h1v1h-1zM15 464h1v1h-1zM3 466h1v1h-1zM5 466h1v1h-1zM7 466h1v1h-1zM9 466h1v1h-1zM11 466h1v1h-1zM13 466h1v1h-1zM15 466h1v1h-1zM3 468h1v1h-1zM5 468h1v1h-1zM7 468h1v1h-1zM9 468h1v1h-1zM11 468h1v1h-1zM13 468h1v1h-1zM15 468h1v1h-1z" fill="#000"/>
<text x="21.00" y="466.50" font-family="Liberation Sans" font-size="11.50" fill="#1a1a1a" letter-spacing="-0.058">metal2</text>
<text x="86.00" y="466.50" font-family="Liberation Sans" font-size="11.50" fill="#1a1a1a" letter-spacing="0.323">drw</text>
<rect x="119.5" y="457.5" width="11" height="11" rx="2" fill="url(#gCheck)" stroke="#b4b4b4"/>
<path d="M121.5 462.5 l3 3.5 l5.5 -7" fill="none" stroke="#cc0000" stroke-width="2.2"/>
<rect x="141.0" y="457.5" width="11" height="11" rx="2" fill="url(#gCheck)" stroke="#b4b4b4"/>
<path d="M143.0 462.5 l3 3.5 l5.5 -7" fill="none" stroke="#cc0000" stroke-width="2.2"/>
<rect x="2" y="472" width="15" height="15" fill="#111"/>
<rect x="3.5" y="473.5" width="12" height="12" fill="#000" stroke="#50d8d8" stroke-width="1.3"/>
<path d="M5 484 L14 475" stroke="#50d8d8" stroke-width="1.2"/>
<text x="21.00" y="483.50" font-family="Liberation Sans" font-size="11.50" fill="#1a1a1a" letter-spacing="-0.058">metal3</text>
<text x="86.00" y="483.50" font-family="Liberation Sans" font-size="11.50" fill="#1a1a1a" letter-spacing="0.323">drw</text>
<rect x="119.5" y="474.5" width="11" height="11" rx="2" fill="url(#gCheck)" stroke="#b4b4b4"/>
<path d="M121.5 479.5 l3 3.5 l5.5 -7" fill="none" stroke="#cc0000" stroke-width="2.2"/>
<rect x="141.0" y="474.5" width="11" height="11" rx="2" fill="url(#gCheck)" stroke="#b4b4b4"/>
<path d="M143.0 479.5 l3 3.5 l5.5 -7" fill="none" stroke="#cc0000" stroke-width="2.2"/>
<rect x="2" y="489" width="15" height="15" fill="#111"/>
<rect x="3.5" y="490.5" width="12" height="12" fill="#000" stroke="#6a2020" stroke-width="1.3"/>
<text x="21.00" y="500.50" font-family="Liberation Sans" font-size="11.50" fill="#1a1a1a" letter-spacing="-0.058">cc</text>
<text x="86.00" y="500.50" font-family="Liberation Sans" font-size="11.50" fill="#1a1a1a" letter-spacing="0.323">drw</text>
<rect x="119.5" y="491.5" width="11" height="11" rx="2" fill="url(#gCheck)" stroke="#b4b4b4"/>
<path d="M121.5 496.5 l3 3.5 l5.5 -7" fill="none" stroke="#cc0000" stroke-width="2.2"/>
<rect x="141.0" y="491.5" width="11" height="11" rx="2" fill="url(#gCheck)" stroke="#b4b4b4"/>
<path d="M143.0 496.5 l3 3.5 l5.5 -7" fill="none" stroke="#cc0000" stroke-width="2.2"/>
<rect x="0" y="506" width="174" height="8" fill="#ececec"/>
<rect x="0" y="506" width="173" height="1" fill="#f8f8f8"/>
<rect x="0" y="514" width="173" height="19" fill="url(#gHdr)"/>
<rect x="0" y="533" width="173" height="1" fill="#4a4a4a"/>
<rect x="173" y="514" width="1" height="20" fill="#7a7a7a"/>
<text x="12.50" y="527.00" font-family="Liberation Sans" font-size="11.50" fill="#111" font-weight="bold" letter-spacing="-0.240">Objects</text>
<rect x="145.5" y="516.5" width="12" height="13" rx="3" fill="url(#gBtn)" stroke="#bdbdbd"/>
<rect x="150.0" y="518.5" width="5" height="4" fill="#fff" stroke="#111" stroke-width="1.2"/><rect x="147.5" y="521.5" width="5" height="4" fill="#fff" stroke="#111" stroke-width="1.2"/>
<rect x="160.0" y="516.5" width="12" height="13" rx="3" fill="url(#gBtn)" stroke="#bdbdbd"/>
<path d="M163.0 520.0 l6 6 M163.0 526.0 l6 -6" stroke="#111" stroke-width="1.4"/>
<rect x="0" y="514" width="173" height="1" fill="#4a4a4a"/>
<rect x="0" y="534" width="174" height="72" fill="#1c1c1c"/>
<rect x="1" y="535" width="155" height="70" fill="#ffffff"/>
<rect x="1" y="535" width="155" height="18" fill="url(#gTH)"/>
<rect x="1" y="552" width="155" height="1" fill="#9a9a9a"/>
<rect x="110" y="537" width="1" height="15" fill="#8a8a8a"/>
<rect x="111" y="537" width="1" height="15" fill="#e8e8e8"/>
<rect x="132" y="537" width="1" height="15" fill="#8a8a8a"/>
<rect x="133" y="537" width="1" height="15" fill="#e8e8e8"/>
<text x="36.00" y="547.50" font-family="Liberation Sans" font-size="11.50" fill="#1a1a1a" font-weight="bold" letter-spacing="-0.240">Objects</text>
<text x="118.50" y="547.50" font-family="Liberation Sans" font-size="11.50" fill="#1a1a1a">V</text>
<text x="141.00" y="547.50" font-family="Liberation Sans" font-size="11.50" fill="#1a1a1a">S</text>
<rect x="156" y="535" width="17" height="70" fill="#9a9a9a"/>
<rect x="156.5" y="535.5" width="15" height="15" fill="url(#gBtn)" stroke="#c0c0c0"/>
<path d="M160 547 L164 542 L168 547 Z" fill="none" stroke="#fff" stroke-width="1.2"/>
<rect x="157.5" y="551.5" width="14" height="19" rx="7" fill="url(#gScroll)" stroke="#b0b0b0"/>
<rect x="161" y="557" width="7" height="1" fill="#8a8a8a"/>
<rect x="161" y="559" width="7" height="1" fill="#8a8a8a"/>
<rect x="161" y="561" width="7" height="1" fill="#8a8a8a"/>
<rect x="161" y="563" width="7" height="1" fill="#8a8a8a"/>
<rect x="156.5" y="587.5" width="15" height="15" fill="url(#gBtn)" stroke="#c0c0c0"/>
<path d="M160 592 L164 597 L168 592 Z" fill="#fff"/>
<path d="M11.5 553 V605" stroke="#555" stroke-width="1" stroke-dasharray="1 1"/>
<path d="M12 560 H21" stroke="#555" stroke-width="1" stroke-dasharray="1 1"/>
<text x="24.00" y="564.80" font-family="Liberation Sans" font-size="11.50" fill="#1a1a1a" letter-spacing="0.000">Instances</text>
<rect x="119.5" y="555.5" width="11" height="11" rx="2" fill="url(#gCheck)" stroke="#b4b4b4"/>
<path d="M121.5 560.5 l3 3.5 l5.5 -7" fill="none" stroke="#cc0000" stroke-width="2.2"/>
<rect x="141.0" y="555.5" width="11" height="11" rx="2" fill="url(#gCheck)" stroke="#b4b4b4"/>
<path d="M143.0 560.5 l3 3.5 l5.5 -7" fill="none" stroke="#cc0000" stroke-width="2.2"/>
<path d="M12 577 H21" stroke="#555" stroke-width="1" stroke-dasharray="1 1"/>
<text x="24.00" y="581.80" font-family="Liberation Sans" font-size="11.50" fill="#1a1a1a" letter-spacing="0.000">Pins</text>
<rect x="119.5" y="572.5" width="11" height="11" rx="2" fill="url(#gCheck)" stroke="#b4b4b4"/>
<path d="M121.5 577.5 l3 3.5 l5.5 -7" fill="none" stroke="#cc0000" stroke-width="2.2"/>
<rect x="141.0" y="572.5" width="11" height="11" rx="2" fill="url(#gCheck)" stroke="#b4b4b4"/>
<path d="M143.0 577.5 l3 3.5 l5.5 -7" fill="none" stroke="#cc0000" stroke-width="2.2"/>
<path d="M12 594 H21" stroke="#555" stroke-width="1" stroke-dasharray="1 1"/>
<text x="24.00" y="598.80" font-family="Liberation Sans" font-size="11.50" fill="#1a1a1a" letter-spacing="0.000">Vias</text>
<rect x="119.5" y="589.5" width="11" height="11" rx="2" fill="url(#gCheck)" stroke="#b4b4b4"/>
<path d="M121.5 594.5 l3 3.5 l5.5 -7" fill="none" stroke="#cc0000" stroke-width="2.2"/>
<rect x="141.0" y="589.5" width="11" height="11" rx="2" fill="url(#gCheck)" stroke="#b4b4b4"/>
<path d="M143.0 594.5 l3 3.5 l5.5 -7" fill="none" stroke="#cc0000" stroke-width="2.2"/>
<rect x="0" y="605" width="174" height="1" fill="#111"/>
<rect x="0" y="606" width="174" height="23" fill="#ececec"/>
<rect x="0" y="606" width="54" height="22" fill="#f2f2f2"/>
<rect x="54" y="606" width="43" height="22" fill="#d4d4d4"/>
<rect x="54" y="606" width="1" height="22" fill="#c0c0c0"/>
<rect x="97" y="606" width="1" height="22" fill="#c0c0c0"/>
<text x="7.30" y="620.50" font-family="Liberation Sans" font-size="11.50" fill="#1a1a1a" letter-spacing="-0.070">Objects</text>
<text x="62.70" y="620.00" font-family="Liberation Sans" font-size="11.50" fill="#1a1a1a" letter-spacing="-0.095">Grids</text>
<rect x="1277" y="0" width="1" height="123" fill="#3c3c3c"/>
<rect x="174" y="123" width="6" height="506" fill="#d2d3d8"/>
<rect x="174" y="123" width="1" height="506" fill="#b8b8bc"/>
<rect x="180" y="123" width="1098" height="2" fill="#ffffff"/>
<rect x="1277" y="123" width="1" height="506" fill="#5a5a5a"/>
<rect x="180" y="125" width="1097" height="504" fill="#000000"/>
<defs>
<pattern id="pSlash8" patternUnits="userSpaceOnUse" x="0" y="0" width="8" height="8"><path d="M4 0h1v1h-1zM3 1h1v1h-1zM2 2h1v1h-1zM1 3h1v1h-1zM0 4h1v1h-1zM7 5h1v1h-1zM6 6h1v1h-1zM5 7h1v1h-1z" fill="#78d4d4"/></pattern>
<pattern id="pVert4" patternUnits="userSpaceOnUse" x="0" y="0" width="4" height="4"><rect x="2" y="0" width="1" height="4" fill="#9a9aae"/></pattern>
<pattern id="pBack4" patternUnits="userSpaceOnUse" x="0" y="0" width="4" height="4"><path d="M3 0h1v1h-1zM0 1h1v1h-1zM1 2h1v1h-1zM2 3h1v1h-1z" fill="#26268a"/></pattern>
<pattern id="pM2" patternUnits="userSpaceOnUse" x="0" y="0" width="4" height="4"><rect width="4" height="4" fill="#0a0040"/><path d="M1 1h1v1h-1z" fill="#9070d8"/><path d="M3 3h1v1h-1z" fill="#b038e0"/></pattern>
<pattern id="pGreenX" patternUnits="userSpaceOnUse" x="0" y="0" width="6" height="6"><path d="M2 0h1v1h-1zM1 1h1v1h-1zM3 1h1v1h-1zM0 2h1v1h-1zM4 2h1v1h-1zM5 3h1v1h-1zM0 4h1v1h-1zM4 4h1v1h-1zM1 5h1v1h-1zM3 5h1v1h-1z" fill="#3aa060"/></pattern>
<pattern id="pGreenDash" patternUnits="userSpaceOnUse" x="0" y="0" width="6" height="6"><path d="M0 1h3v1h-3z M4 3h1v2h-1z" fill="#3aa060"/></pattern>
<pattern id="pSD" patternUnits="userSpaceOnUse" x="0" y="0" width="3" height="3"><rect width="3" height="3" fill="#1010b8"/><rect x="1" y="1" width="1" height="1" fill="#8878f0"/></pattern>
<pattern id="pOrange" patternUnits="userSpaceOnUse" x="0" y="0" width="3" height="3"><rect x="0" y="0" width="1" height="1" fill="#d09040"/></pattern>
</defs>
<rect x="293" y="171" width="78" height="78" fill="url(#pVert4)" shape-rendering="crispEdges"/>
<rect x="293.5" y="171.5" width="77" height="77" fill="none" stroke="#9a9aae" stroke-width="1" shape-rendering="crispEdges"/>
<rect x="272" y="150" width="120" height="120" fill="url(#pSlash8)" shape-rendering="crispEdges"/>
<rect x="272.5" y="150.5" width="119" height="119" fill="none" stroke="#58e0e0" stroke-width="1" shape-rendering="crispEdges"/>
<rect x="558" y="171" width="77" height="78" fill="url(#pVert4)" shape-rendering="crispEdges"/>
<rect x="558.5" y="171.5" width="76" height="77" fill="none" stroke="#9a9aae" stroke-width="1" shape-rendering="crispEdges"/>
<rect x="537" y="150" width="119" height="120" fill="url(#pSlash8)" shape-rendering="crispEdges"/>
<rect x="537.5" y="150.5" width="118" height="119" fill="none" stroke="#58e0e0" stroke-width="1" shape-rendering="crispEdges"/>
<rect x="823" y="171" width="77" height="78" fill="url(#pVert4)" shape-rendering="crispEdges"/>
<rect x="823.5" y="171.5" width="76" height="77" fill="none" stroke="#9a9aae" stroke-width="1" shape-rendering="crispEdges"/>
<rect x="802" y="150" width="119" height="120" fill="url(#pSlash8)" shape-rendering="crispEdges"/>
<rect x="802.5" y="150.5" width="118" height="119" fill="none" stroke="#58e0e0" stroke-width="1" shape-rendering="crispEdges"/>
<rect x="1087" y="171" width="78" height="78" fill="url(#pVert4)" shape-rendering="crispEdges"/>
<rect x="1087.5" y="171.5" width="77" height="77" fill="none" stroke="#9a9aae" stroke-width="1" shape-rendering="crispEdges"/>
<rect x="1066" y="150" width="120" height="120" fill="url(#pSlash8)" shape-rendering="crispEdges"/>
<rect x="1066.5" y="150.5" width="119" height="119" fill="none" stroke="#58e0e0" stroke-width="1" shape-rendering="crispEdges"/>
<rect x="742" y="536" width="27" height="56" fill="url(#pGreenX)" shape-rendering="crispEdges"/>
<rect x="742.5" y="536.5" width="26" height="55" fill="none" stroke="#3cb46a" stroke-width="1" shape-rendering="crispEdges"/>
<rect x="746" y="540" width="18" height="48" fill="#000000" shape-rendering="crispEdges"/>
<rect x="746.5" y="540.5" width="17" height="47" fill="none" stroke="#d09040" stroke-width="1" shape-rendering="crispEdges"/>
<rect x="748" y="541" width="6" height="46" fill="url(#pSD)" shape-rendering="crispEdges"/>
<rect x="757" y="541" width="6" height="46" fill="url(#pSD)" shape-rendering="crispEdges"/>
<rect x="755" y="592" width="14" height="13" fill="url(#pGreenDash)" shape-rendering="crispEdges"/>
<rect x="755.5" y="592.5" width="13" height="12" fill="none" stroke="#3cb46a" stroke-width="1" shape-rendering="crispEdges"/>
<rect x="756" y="595" width="8" height="6" fill="#1a2aa0" shape-rendering="crispEdges"/>
<path d="M757.5 599.5 L762.5 595.5" stroke="#60a0e0" stroke-width="1"/>
<rect x="350" y="595" width="406" height="6" fill="#00002e" shape-rendering="crispEdges"/>
<rect x="350" y="595" width="406" height="6" fill="url(#pBack4)" shape-rendering="crispEdges"/>
<rect x="350.5" y="595.5" width="405" height="5" fill="none" stroke="#1818c0" stroke-width="1" shape-rendering="crispEdges"/>
<rect x="615" y="534" width="155" height="7" fill="#00002e" shape-rendering="crispEdges"/>
<rect x="615" y="534" width="155" height="7" fill="url(#pBack4)" shape-rendering="crispEdges"/>
<rect x="615.5" y="534.5" width="154" height="6" fill="none" stroke="#1818c0" stroke-width="1" shape-rendering="crispEdges"/>
<rect x="769" y="534" width="340" height="5" fill="#00002e" shape-rendering="crispEdges"/>
<rect x="769" y="534" width="340" height="5" fill="url(#pBack4)" shape-rendering="crispEdges"/>
<rect x="769.5" y="534.5" width="339" height="4" fill="none" stroke="#1818c0" stroke-width="1" shape-rendering="crispEdges"/>
<rect x="753" y="522" width="89" height="7" fill="#00002e" shape-rendering="crispEdges"/>
<rect x="753" y="522" width="89" height="7" fill="url(#pBack4)" shape-rendering="crispEdges"/>
<rect x="753.5" y="522.5" width="88" height="6" fill="none" stroke="#1818c0" stroke-width="1" shape-rendering="crispEdges"/>
<rect x="754" y="529" width="3" height="59" fill="#e01818" shape-rendering="crispEdges"/>
<path d="M755 533h1v1h-1z M755 537h1v1h-1z M755 541h1v1h-1z M755 575h1v1h-1z M755 579h1v1h-1z M755 583h1v1h-1z" fill="#400000"/>
<rect x="755" y="570" width="1" height="4" fill="#ffd0d0" shape-rendering="crispEdges"/>
<rect x="328" y="269" width="8" height="327" fill="url(#pSlash8)" shape-rendering="crispEdges"/>
<rect x="329" y="576" width="6" height="7" fill="#000018" shape-rendering="crispEdges"/>
<path d="M329.5 576.5 L334.5 582.5 M334.5 576.5 L329.5 582.5" stroke="#5a70c8" stroke-width="1" opacity="0.8"/>
<rect x="328.5" y="576.5" width="7" height="6" fill="none" stroke="#58e0e0" stroke-width="1" shape-rendering="crispEdges"/>
<rect x="329" y="582" width="6" height="8" fill="#000018" shape-rendering="crispEdges"/>
<path d="M329.5 582.5 L334.5 589.5 M334.5 582.5 L329.5 589.5" stroke="#5a70c8" stroke-width="1" opacity="0.8"/>
<rect x="328.5" y="582.5" width="7" height="7" fill="none" stroke="#58e0e0" stroke-width="1" shape-rendering="crispEdges"/>
<rect x="329" y="589" width="6" height="7" fill="#000018" shape-rendering="crispEdges"/>
<path d="M329.5 589.5 L334.5 595.5 M334.5 589.5 L329.5 595.5" stroke="#5a70c8" stroke-width="1" opacity="0.8"/>
<rect x="328.5" y="589.5" width="7" height="6" fill="none" stroke="#58e0e0" stroke-width="1" shape-rendering="crispEdges"/>
<rect x="328.5" y="269.5" width="7" height="326" fill="none" stroke="#58e0e0" stroke-width="1" shape-rendering="crispEdges"/>
<rect x="328" y="595" width="22" height="7" fill="url(#pM2)" shape-rendering="crispEdges"/>
<rect x="328.5" y="595.5" width="21" height="6" fill="none" stroke="#c040e8" stroke-width="1" shape-rendering="crispEdges"/>
<rect x="335" y="595" width="1" height="7" fill="#c040e8"/>
<rect x="593" y="269" width="7" height="266" fill="url(#pSlash8)" shape-rendering="crispEdges"/>
<rect x="594" y="515" width="5" height="7" fill="#000018" shape-rendering="crispEdges"/>
<path d="M594.5 515.5 L598.5 521.5 M598.5 515.5 L594.5 521.5" stroke="#5a70c8" stroke-width="1" opacity="0.8"/>
<rect x="593.5" y="515.5" width="6" height="6" fill="none" stroke="#58e0e0" stroke-width="1" shape-rendering="crispEdges"/>
<rect x="594" y="521" width="5" height="8" fill="#000018" shape-rendering="crispEdges"/>
<path d="M594.5 521.5 L598.5 528.5 M598.5 521.5 L594.5 528.5" stroke="#5a70c8" stroke-width="1" opacity="0.8"/>
<rect x="593.5" y="521.5" width="6" height="7" fill="none" stroke="#58e0e0" stroke-width="1" shape-rendering="crispEdges"/>
<rect x="594" y="528" width="5" height="7" fill="#000018" shape-rendering="crispEdges"/>
<path d="M594.5 528.5 L598.5 534.5 M598.5 528.5 L594.5 534.5" stroke="#5a70c8" stroke-width="1" opacity="0.8"/>
<rect x="593.5" y="528.5" width="6" height="6" fill="none" stroke="#58e0e0" stroke-width="1" shape-rendering="crispEdges"/>
<rect x="593.5" y="269.5" width="6" height="265" fill="none" stroke="#58e0e0" stroke-width="1" shape-rendering="crispEdges"/>
<rect x="593" y="534" width="22" height="7" fill="url(#pM2)" shape-rendering="crispEdges"/>
<rect x="593.5" y="534.5" width="21" height="6" fill="none" stroke="#c040e8" stroke-width="1" shape-rendering="crispEdges"/>
<rect x="599" y="534" width="1" height="7" fill="#c040e8"/>
<rect x="858" y="269" width="7" height="254" fill="url(#pSlash8)" shape-rendering="crispEdges"/>
<rect x="859" y="503" width="5" height="7" fill="#000018" shape-rendering="crispEdges"/>
<path d="M859.5 503.5 L863.5 509.5 M863.5 503.5 L859.5 509.5" stroke="#5a70c8" stroke-width="1" opacity="0.8"/>
<rect x="858.5" y="503.5" width="6" height="6" fill="none" stroke="#58e0e0" stroke-width="1" shape-rendering="crispEdges"/>
<rect x="859" y="509" width="5" height="8" fill="#000018" shape-rendering="crispEdges"/>
<path d="M859.5 509.5 L863.5 516.5 M863.5 509.5 L859.5 516.5" stroke="#5a70c8" stroke-width="1" opacity="0.8"/>
<rect x="858.5" y="509.5" width="6" height="7" fill="none" stroke="#58e0e0" stroke-width="1" shape-rendering="crispEdges"/>
<rect x="859" y="516" width="5" height="7" fill="#000018" shape-rendering="crispEdges"/>
<path d="M859.5 516.5 L863.5 522.5 M863.5 516.5 L859.5 522.5" stroke="#5a70c8" stroke-width="1" opacity="0.8"/>
<rect x="858.5" y="516.5" width="6" height="6" fill="none" stroke="#58e0e0" stroke-width="1" shape-rendering="crispEdges"/>
<rect x="858.5" y="269.5" width="6" height="253" fill="none" stroke="#58e0e0" stroke-width="1" shape-rendering="crispEdges"/>
<rect x="842" y="522" width="23" height="7" fill="url(#pM2)" shape-rendering="crispEdges"/>
<rect x="842.5" y="522.5" width="22" height="6" fill="none" stroke="#c040e8" stroke-width="1" shape-rendering="crispEdges"/>
<rect x="858" y="522" width="1" height="7" fill="#c040e8"/>
<rect x="1122" y="269" width="8" height="270" fill="url(#pSlash8)" shape-rendering="crispEdges"/>
<rect x="1123" y="515" width="6" height="7" fill="#000018" shape-rendering="crispEdges"/>
<path d="M1123.5 515.5 L1128.5 521.5 M1128.5 515.5 L1123.5 521.5" stroke="#5a70c8" stroke-width="1" opacity="0.8"/>
<rect x="1122.5" y="515.5" width="7" height="6" fill="none" stroke="#58e0e0" stroke-width="1" shape-rendering="crispEdges"/>
<rect x="1123" y="521" width="6" height="8" fill="#000018" shape-rendering="crispEdges"/>
<path d="M1123.5 521.5 L1128.5 528.5 M1128.5 521.5 L1123.5 528.5" stroke="#5a70c8" stroke-width="1" opacity="0.8"/>
<rect x="1122.5" y="521.5" width="7" height="7" fill="none" stroke="#58e0e0" stroke-width="1" shape-rendering="crispEdges"/>
<rect x="1123" y="528" width="6" height="6" fill="#000018" shape-rendering="crispEdges"/>
<path d="M1123.5 528.5 L1128.5 533.5 M1128.5 528.5 L1123.5 533.5" stroke="#5a70c8" stroke-width="1" opacity="0.8"/>
<rect x="1122.5" y="528.5" width="7" height="5" fill="none" stroke="#58e0e0" stroke-width="1" shape-rendering="crispEdges"/>
<rect x="1122.5" y="269.5" width="7" height="269" fill="none" stroke="#58e0e0" stroke-width="1" shape-rendering="crispEdges"/>
<rect x="1109" y="534" width="14" height="5" fill="url(#pM2)" shape-rendering="crispEdges"/>
<rect x="1109.5" y="534.5" width="13" height="4" fill="none" stroke="#c040e8" stroke-width="1" shape-rendering="crispEdges"/>
<rect x="1122.5" y="533.5" width="7" height="5" fill="none" stroke="#58e0e0" stroke-width="1" shape-rendering="crispEdges"/>
<path d="M189 139h3v1h-3zM190 138h1v3h-1zM207 139h3v1h-3zM208 138h1v3h-1zM225 139h3v1h-3zM226 138h1v3h-1zM242 139h3v1h-3zM243 138h1v3h-1zM260 139h3v1h-3zM261 138h1v3h-1zM278 139h3v1h-3zM279 138h1v3h-1zM295 139h3v1h-3zM296 138h1v3h-1zM313 139h3v1h-3zM314 138h1v3h-1zM330 139h3v1h-3zM331 138h1v3h-1zM348 139h3v1h-3zM349 138h1v3h-1zM366 139h3v1h-3zM367 138h1v3h-1zM383 139h3v1h-3zM384 138h1v3h-1zM401 139h3v1h-3zM402 138h1v3h-1zM419 139h3v1h-3zM420 138h1v3h-1zM436 139h3v1h-3zM437 138h1v3h-1zM454 139h3v1h-3zM455 138h1v3h-1zM472 139h3v1h-3zM473 138h1v3h-1zM489 139h3v1h-3zM490 138h1v3h-1zM507 139h3v1h-3zM508 138h1v3h-1zM525 139h3v1h-3zM526 138h1v3h-1zM542 139h3v1h-3zM543 138h1v3h-1zM560 139h3v1h-3zM561 138h1v3h-1zM578 139h3v1h-3zM579 138h1v3h-1zM595 139h3v1h-3zM596 138h1v3h-1zM613 139h3v1h-3zM614 138h1v3h-1zM630 139h3v1h-3zM631 138h1v3h-1zM648 139h3v1h-3zM649 138h1v3h-1zM666 139h3v1h-3zM667 138h1v3h-1zM683 139h3v1h-3zM684 138h1v3h-1zM701 139h3v1h-3zM702 138h1v3h-1zM719 139h3v1h-3zM720 138h1v3h-1zM736 139h3v1h-3zM737 138h1v3h-1zM754 139h3v1h-3zM755 138h1v3h-1zM772 139h3v1h-3zM773 138h1v3h-1zM789 139h3v1h-3zM790 138h1v3h-1zM807 139h3v1h-3zM808 138h1v3h-1zM825 139h3v1h-3zM826 138h1v3h-1zM842 139h3v1h-3zM843 138h1v3h-1zM860 139h3v1h-3zM861 138h1v3h-1zM877 139h3v1h-3zM878 138h1v3h-1zM895 139h3v1h-3zM896 138h1v3h-1zM913 139h3v1h-3zM914 138h1v3h-1zM930 139h3v1h-3zM931 138h1v3h-1zM948 139h3v1h-3zM949 138h1v3h-1zM966 139h3v1h-3zM967 138h1v3h-1zM983 139h3v1h-3zM984 138h1v3h-1zM1001 139h3v1h-3zM1002 138h1v3h-1zM1019 139h3v1h-3zM1020 138h1v3h-1zM1036 139h3v1h-3zM1037 138h1v3h-1zM1054 139h3v1h-3zM1055 138h1v3h-1zM1072 139h3v1h-3zM1073 138h1v3h-1zM1089 139h3v1h-3zM1090 138h1v3h-1zM1107 139h3v1h-3zM1108 138h1v3h-1zM1124 139h3v1h-3zM1125 138h1v3h-1zM1142 139h3v1h-3zM1143 138h1v3h-1zM1160 139h3v1h-3zM1161 138h1v3h-1zM1177 139h3v1h-3zM1178 138h1v3h-1zM1195 139h3v1h-3zM1196 138h1v3h-1zM1213 139h3v1h-3zM1214 138h1v3h-1zM1230 139h3v1h-3zM1231 138h1v3h-1zM1248 139h3v1h-3zM1249 138h1v3h-1zM1266 139h3v1h-3zM1267 138h1v3h-1zM189 157h3v1h-3zM190 156h1v3h-1zM207 157h3v1h-3zM208 156h1v3h-1zM225 157h3v1h-3zM226 156h1v3h-1zM242 157h3v1h-3zM243 156h1v3h-1zM260 157h3v1h-3zM261 156h1v3h-1zM278 157h3v1h-3zM279 156h1v3h-1zM295 157h3v1h-3zM296 156h1v3h-1zM313 157h3v1h-3zM314 156h1v3h-1zM330 157h3v1h-3zM331 156h1v3h-1zM348 157h3v1h-3zM349 156h1v3h-1zM366 157h3v1h-3zM367 156h1v3h-1zM383 157h3v1h-3zM384 156h1v3h-1zM401 157h3v1h-3zM402 156h1v3h-1zM419 157h3v1h-3zM420 156h1v3h-1zM436 157h3v1h-3zM437 156h1v3h-1zM454 157h3v1h-3zM455 156h1v3h-1zM472 157h3v1h-3zM473 156h1v3h-1zM489 157h3v1h-3zM490 156h1v3h-1zM507 157h3v1h-3zM508 156h1v3h-1zM525 157h3v1h-3zM526 156h1v3h-1zM542 157h3v1h-3zM543 156h1v3h-1zM560 157h3v1h-3zM561 156h1v3h-1zM578 157h3v1h-3zM579 156h1v3h-1zM595 157h3v1h-3zM596 156h1v3h-1zM613 157h3v1h-3zM614 156h1v3h-1zM630 157h3v1h-3zM631 156h1v3h-1zM648 157h3v1h-3zM649 156h1v3h-1zM666 157h3v1h-3zM667 156h1v3h-1zM683 157h3v1h-3zM684 156h1v3h-1zM701 157h3v1h-3zM702 156h1v3h-1zM719 157h3v1h-3zM720 156h1v3h-1zM736 157h3v1h-3zM737 156h1v3h-1zM754 157h3v1h-3zM755 156h1v3h-1zM772 157h3v1h-3zM773 156h1v3h-1zM789 157h3v1h-3zM790 156h1v3h-1zM807 157h3v1h-3zM808 156h1v3h-1zM825 157h3v1h-3zM826 156h1v3h-1zM842 157h3v1h-3zM843 156h1v3h-1zM860 157h3v1h-3zM861 156h1v3h-1zM877 157h3v1h-3zM878 156h1v3h-1zM895 157h3v1h-3zM896 156h1v3h-1zM913 157h3v1h-3zM914 156h1v3h-1zM930 157h3v1h-3zM931 156h1v3h-1zM948 157h3v1h-3zM949 156h1v3h-1zM966 157h3v1h-3zM967 156h1v3h-1zM983 157h3v1h-3zM984 156h1v3h-1zM1001 157h3v1h-3zM1002 156h1v3h-1zM1019 157h3v1h-3zM1020 156h1v3h-1zM1036 157h3v1h-3zM1037 156h1v3h-1zM1054 157h3v1h-3zM1055 156h1v3h-1zM1072 157h3v1h-3zM1073 156h1v3h-1zM1089 157h3v1h-3zM1090 156h1v3h-1zM1107 157h3v1h-3zM1108 156h1v3h-1zM1124 157h3v1h-3zM1125 156h1v3h-1zM1142 157h3v1h-3zM1143 156h1v3h-1zM1160 157h3v1h-3zM1161 156h1v3h-1zM1177 157h3v1h-3zM1178 156h1v3h-1zM1195 157h3v1h-3zM1196 156h1v3h-1zM1213 157h3v1h-3zM1214 156h1v3h-1zM1230 157h3v1h-3zM1231 156h1v3h-1zM1248 157h3v1h-3zM1249 156h1v3h-1zM1266 157h3v1h-3zM1267 156h1v3h-1zM189 174h3v1h-3zM190 173h1v3h-1zM207 174h3v1h-3zM208 173h1v3h-1zM225 174h3v1h-3zM226 173h1v3h-1zM242 174h3v1h-3zM243 173h1v3h-1zM260 174h3v1h-3zM261 173h1v3h-1zM278 174h3v1h-3zM279 173h1v3h-1zM295 174h3v1h-3zM296 173h1v3h-1zM313 174h3v1h-3zM314 173h1v3h-1zM330 174h3v1h-3zM331 173h1v3h-1zM348 174h3v1h-3zM349 173h1v3h-1zM366 174h3v1h-3zM367 173h1v3h-1zM383 174h3v1h-3zM384 173h1v3h-1zM401 174h3v1h-3zM402 173h1v3h-1zM419 174h3v1h-3zM420 173h1v3h-1zM436 174h3v1h-3zM437 173h1v3h-1zM454 174h3v1h-3zM455 173h1v3h-1zM472 174h3v1h-3zM473 173h1v3h-1zM489 174h3v1h-3zM490 173h1v3h-1zM507 174h3v1h-3zM508 173h1v3h-1zM525 174h3v1h-3zM526 173h1v3h-1zM542 174h3v1h-3zM543 173h1v3h-1zM560 174h3v1h-3zM561 173h1v3h-1zM578 174h3v1h-3zM579 173h1v3h-1zM595 174h3v1h-3zM596 173h1v3h-1zM613 174h3v1h-3zM614 173h1v3h-1zM630 174h3v1h-3zM631 173h1v3h-1zM648 174h3v1h-3zM649 173h1v3h-1zM666 174h3v1h-3zM667 173h1v3h-1zM683 174h3v1h-3zM684 173h1v3h-1zM701 174h3v1h-3zM702 173h1v3h-1zM719 174h3v1h-3zM720 173h1v3h-1zM736 174h3v1h-3zM737 173h1v3h-1zM754 174h3v1h-3zM755 173h1v3h-1zM772 174h3v1h-3zM773 173h1v3h-1zM789 174h3v1h-3zM790 173h1v3h-1zM807 174h3v1h-3zM808 173h1v3h-1zM825 174h3v1h-3zM826 173h1v3h-1zM842 174h3v1h-3zM843 173h1v3h-1zM860 174h3v1h-3zM861 173h1v3h-1zM877 174h3v1h-3zM878 173h1v3h-1zM895 174h3v1h-3zM896 173h1v3h-1zM913 174h3v1h-3zM914 173h1v3h-1zM930 174h3v1h-3zM931 173h1v3h-1zM948 174h3v1h-3zM949 173h1v3h-1zM966 174h3v1h-3zM967 173h1v3h-1zM983 174h3v1h-3zM984 173h1v3h-1zM1001 174h3v1h-3zM1002 173h1v3h-1zM1019 174h3v1h-3zM1020 173h1v3h-1zM1036 174h3v1h-3zM1037 173h1v3h-1zM1054 174h3v1h-3zM1055 173h1v3h-1zM1072 174h3v1h-3zM1073 173h1v3h-1zM1089 174h3v1h-3zM1090 173h1v3h-1zM1107 174h3v1h-3zM1108 173h1v3h-1zM1124 174h3v1h-3zM1125 173h1v3h-1zM1142 174h3v1h-3zM1143 173h1v3h-1zM1160 174h3v1h-3zM1161 173h1v3h-1zM1177 174h3v1h-3zM1178 173h1v3h-1zM1195 174h3v1h-3zM1196 173h1v3h-1zM1213 174h3v1h-3zM1214 173h1v3h-1zM1230 174h3v1h-3zM1231 173h1v3h-1zM1248 174h3v1h-3zM1249 173h1v3h-1zM1266 174h3v1h-3zM1267 173h1v3h-1zM189 192h3v1h-3zM190 191h1v3h-1zM207 192h3v1h-3zM208 191h1v3h-1zM225 192h3v1h-3zM226 191h1v3h-1zM242 192h3v1h-3zM243 191h1v3h-1zM260 192h3v1h-3zM261 191h1v3h-1zM278 192h3v1h-3zM279 191h1v3h-1zM295 192h3v1h-3zM296 191h1v3h-1zM313 192h3v1h-3zM314 191h1v3h-1zM330 192h3v1h-3zM331 191h1v3h-1zM348 192h3v1h-3zM349 191h1v3h-1zM366 192h3v1h-3zM367 191h1v3h-1zM383 192h3v1h-3zM384 191h1v3h-1zM401 192h3v1h-3zM402 191h1v3h-1zM419 192h3v1h-3zM420 191h1v3h-1zM436 192h3v1h-3zM437 191h1v3h-1zM454 192h3v1h-3zM455 191h1v3h-1zM472 192h3v1h-3zM473 191h1v3h-1zM489 192h3v1h-3zM490 191h1v3h-1zM507 192h3v1h-3zM508 191h1v3h-1zM525 192h3v1h-3zM526 191h1v3h-1zM542 192h3v1h-3zM543 191h1v3h-1zM560 192h3v1h-3zM561 191h1v3h-1zM578 192h3v1h-3zM579 191h1v3h-1zM595 192h3v1h-3zM596 191h1v3h-1zM613 192h3v1h-3zM614 191h1v3h-1zM630 192h3v1h-3zM631 191h1v3h-1zM648 192h3v1h-3zM649 191h1v3h-1zM666 192h3v1h-3zM667 191h1v3h-1zM683 192h3v1h-3zM684 191h1v3h-1zM701 192h3v1h-3zM702 191h1v3h-1zM719 192h3v1h-3zM720 191h1v3h-1zM736 192h3v1h-3zM737 191h1v3h-1zM754 192h3v1h-3zM755 191h1v3h-1zM772 192h3v1h-3zM773 191h1v3h-1zM789 192h3v1h-3zM790 191h1v3h-1zM807 192h3v1h-3zM808 191h1v3h-1zM825 192h3v1h-3zM826 191h1v3h-1zM842 192h3v1h-3zM843 191h1v3h-1zM860 192h3v1h-3zM861 191h1v3h-1zM877 192h3v1h-3zM878 191h1v3h-1zM895 192h3v1h-3zM896 191h1v3h-1zM913 192h3v1h-3zM914 191h1v3h-1zM930 192h3v1h-3zM931 191h1v3h-1zM948 192h3v1h-3zM949 191h1v3h-1zM966 192h3v1h-3zM967 191h1v3h-1zM983 192h3v1h-3zM984 191h1v3h-1zM1001 192h3v1h-3zM1002 191h1v3h-1zM1019 192h3v1h-3zM1020 191h1v3h-1zM1036 192h3v1h-3zM1037 191h1v3h-1zM1054 192h3v1h-3zM1055 191h1v3h-1zM1072 192h3v1h-3zM1073 191h1v3h-1zM1089 192h3v1h-3zM1090 191h1v3h-1zM1107 192h3v1h-3zM1108 191h1v3h-1zM1124 192h3v1h-3zM1125 191h1v3h-1zM1142 192h3v1h-3zM1143 191h1v3h-1zM1160 192h3v1h-3zM1161 191h1v3h-1zM1177 192h3v1h-3zM1178 191h1v3h-1zM1195 192h3v1h-3zM1196 191h1v3h-1zM1213 192h3v1h-3zM1214 191h1v3h-1zM1230 192h3v1h-3zM1231 191h1v3h-1zM1248 192h3v1h-3zM1249 191h1v3h-1zM1266 192h3v1h-3zM1267 191h1v3h-1zM189 209h3v1h-3zM190 208h1v3h-1zM207 209h3v1h-3zM208 208h1v3h-1zM225 209h3v1h-3zM226 208h1v3h-1zM242 209h3v1h-3zM243 208h1v3h-1zM260 209h3v1h-3zM261 208h1v3h-1zM278 209h3v1h-3zM279 208h1v3h-1zM295 209h3v1h-3zM296 208h1v3h-1zM313 209h3v1h-3zM314 208h1v3h-1zM330 209h3v1h-3zM331 208h1v3h-1zM348 209h3v1h-3zM349 208h1v3h-1zM366 209h3v1h-3zM367 208h1v3h-1zM383 209h3v1h-3zM384 208h1v3h-1zM401 209h3v1h-3zM402 208h1v3h-1zM419 209h3v1h-3zM420 208h1v3h-1zM436 209h3v1h-3zM437 208h1v3h-1zM454 209h3v1h-3zM455 208h1v3h-1zM472 209h3v1h-3zM473 208h1v3h-1zM489 209h3v1h-3zM490 208h1v3h-1zM507 209h3v1h-3zM508 208h1v3h-1zM525 209h3v1h-3zM526 208h1v3h-1zM542 209h3v1h-3zM543 208h1v3h-1zM560 209h3v1h-3zM561 208h1v3h-1zM578 209h3v1h-3zM579 208h1v3h-1zM595 209h3v1h-3zM596 208h1v3h-1zM613 209h3v1h-3zM614 208h1v3h-1zM630 209h3v1h-3zM631 208h1v3h-1zM648 209h3v1h-3zM649 208h1v3h-1zM666 209h3v1h-3zM667 208h1v3h-1zM683 209h3v1h-3zM684 208h1v3h-1zM701 209h3v1h-3zM702 208h1v3h-1zM719 209h3v1h-3zM720 208h1v3h-1zM736 209h3v1h-3zM737 208h1v3h-1zM754 209h3v1h-3zM755 208h1v3h-1zM772 209h3v1h-3zM773 208h1v3h-1zM789 209h3v1h-3zM790 208h1v3h-1zM807 209h3v1h-3zM808 208h1v3h-1zM825 209h3v1h-3zM826 208h1v3h-1zM842 209h3v1h-3zM843 208h1v3h-1zM860 209h3v1h-3zM861 208h1v3h-1zM877 209h3v1h-3zM878 208h1v3h-1zM895 209h3v1h-3zM896 208h1v3h-1zM913 209h3v1h-3zM914 208h1v3h-1zM930 209h3v1h-3zM931 208h1v3h-1zM948 209h3v1h-3zM949 208h1v3h-1zM966 209h3v1h-3zM967 208h1v3h-1zM983 209h3v1h-3zM984 208h1v3h-1zM1001 209h3v1h-3zM1002 208h1v3h-1zM1019 209h3v1h-3zM1020 208h1v3h-1zM1036 209h3v1h-3zM1037 208h1v3h-1zM1054 209h3v1h-3zM1055 208h1v3h-1zM1072 209h3v1h-3zM1073 208h1v3h-1zM1089 209h3v1h-3zM1090 208h1v3h-1zM1107 209h3v1h-3zM1108 208h1v3h-1zM1124 209h3v1h-3zM1125 208h1v3h-1zM1142 209h3v1h-3zM1143 208h1v3h-1zM1160 209h3v1h-3zM1161 208h1v3h-1zM1177 209h3v1h-3zM1178 208h1v3h-1zM1195 209h3v1h-3zM1196 208h1v3h-1zM1213 209h3v1h-3zM1214 208h1v3h-1zM1230 209h3v1h-3zM1231 208h1v3h-1zM1248 209h3v1h-3zM1249 208h1v3h-1zM1266 209h3v1h-3zM1267 208h1v3h-1zM189 227h3v1h-3zM190 226h1v3h-1zM207 227h3v1h-3zM208 226h1v3h-1zM225 227h3v1h-3zM226 226h1v3h-1zM242 227h3v1h-3zM243 226h1v3h-1zM260 227h3v1h-3zM261 226h1v3h-1zM278 227h3v1h-3zM279 226h1v3h-1zM295 227h3v1h-3zM296 226h1v3h-1zM313 227h3v1h-3zM314 226h1v3h-1zM330 227h3v1h-3zM331 226h1v3h-1zM348 227h3v1h-3zM349 226h1v3h-1zM366 227h3v1h-3zM367 226h1v3h-1zM383 227h3v1h-3zM384 226h1v3h-1zM401 227h3v1h-3zM402 226h1v3h-1zM419 227h3v1h-3zM420 226h1v3h-1zM436 227h3v1h-3zM437 226h1v3h-1zM454 227h3v1h-3zM455 226h1v3h-1zM472 227h3v1h-3zM473 226h1v3h-1zM489 227h3v1h-3zM490 226h1v3h-1zM507 227h3v1h-3zM508 226h1v3h-1zM525 227h3v1h-3zM526 226h1v3h-1zM542 227h3v1h-3zM543 226h1v3h-1zM560 227h3v1h-3zM561 226h1v3h-1zM578 227h3v1h-3zM579 226h1v3h-1zM595 227h3v1h-3zM596 226h1v3h-1zM613 227h3v1h-3zM614 226h1v3h-1zM630 227h3v1h-3zM631 226h1v3h-1zM648 227h3v1h-3zM649 226h1v3h-1zM666 227h3v1h-3zM667 226h1v3h-1zM683 227h3v1h-3zM684 226h1v3h-1zM701 227h3v1h-3zM702 226h1v3h-1zM719 227h3v1h-3zM720 226h1v3h-1zM736 227h3v1h-3zM737 226h1v3h-1zM754 227h3v1h-3zM755 226h1v3h-1zM772 227h3v1h-3zM773 226h1v3h-1zM789 227h3v1h-3zM790 226h1v3h-1zM807 227h3v1h-3zM808 226h1v3h-1zM825 227h3v1h-3zM826 226h1v3h-1zM842 227h3v1h-3zM843 226h1v3h-1zM860 227h3v1h-3zM861 226h1v3h-1zM877 227h3v1h-3zM878 226h1v3h-1zM895 227h3v1h-3zM896 226h1v3h-1zM913 227h3v1h-3zM914 226h1v3h-1zM930 227h3v1h-3zM931 226h1v3h-1zM948 227h3v1h-3zM949 226h1v3h-1zM966 227h3v1h-3zM967 226h1v3h-1zM983 227h3v1h-3zM984 226h1v3h-1zM1001 227h3v1h-3zM1002 226h1v3h-1zM1019 227h3v1h-3zM1020 226h1v3h-1zM1036 227h3v1h-3zM1037 226h1v3h-1zM1054 227h3v1h-3zM1055 226h1v3h-1zM1072 227h3v1h-3zM1073 226h1v3h-1zM1089 227h3v1h-3zM1090 226h1v3h-1zM1107 227h3v1h-3zM1108 226h1v3h-1zM1124 227h3v1h-3zM1125 226h1v3h-1zM1142 227h3v1h-3zM1143 226h1v3h-1zM1160 227h3v1h-3zM1161 226h1v3h-1zM1177 227h3v1h-3zM1178 226h1v3h-1zM1195 227h3v1h-3zM1196 226h1v3h-1zM1213 227h3v1h-3zM1214 226h1v3h-1zM1230 227h3v1h-3zM1231 226h1v3h-1zM1248 227h3v1h-3zM1249 226h1v3h-1zM1266 227h3v1h-3zM1267 226h1v3h-1zM189 245h3v1h-3zM190 244h1v3h-1zM207 245h3v1h-3zM208 244h1v3h-1zM225 245h3v1h-3zM226 244h1v3h-1zM242 245h3v1h-3zM243 244h1v3h-1zM260 245h3v1h-3zM261 244h1v3h-1zM278 245h3v1h-3zM279 244h1v3h-1zM295 245h3v1h-3zM296 244h1v3h-1zM313 245h3v1h-3zM314 244h1v3h-1zM330 245h3v1h-3zM331 244h1v3h-1zM348 245h3v1h-3zM349 244h1v3h-1zM366 245h3v1h-3zM367 244h1v3h-1zM383 245h3v1h-3zM384 244h1v3h-1zM401 245h3v1h-3zM402 244h1v3h-1zM419 245h3v1h-3zM420 244h1v3h-1zM436 245h3v1h-3zM437 244h1v3h-1zM454 245h3v1h-3zM455 244h1v3h-1zM472 245h3v1h-3zM473 244h1v3h-1zM489 245h3v1h-3zM490 244h1v3h-1zM507 245h3v1h-3zM508 244h1v3h-1zM525 245h3v1h-3zM526 244h1v3h-1zM542 245h3v1h-3zM543 244h1v3h-1zM560 245h3v1h-3zM561 244h1v3h-1zM578 245h3v1h-3zM579 244h1v3h-1zM595 245h3v1h-3zM596 244h1v3h-1zM613 245h3v1h-3zM614 244h1v3h-1zM630 245h3v1h-3zM631 244h1v3h-1zM648 245h3v1h-3zM649 244h1v3h-1zM666 245h3v1h-3zM667 244h1v3h-1zM683 245h3v1h-3zM684 244h1v3h-1zM701 245h3v1h-3zM702 244h1v3h-1zM719 245h3v1h-3zM720 244h1v3h-1zM736 245h3v1h-3zM737 244h1v3h-1zM754 245h3v1h-3zM755 244h1v3h-1zM772 245h3v1h-3zM773 244h1v3h-1zM789 245h3v1h-3zM790 244h1v3h-1zM807 245h3v1h-3zM808 244h1v3h-1zM825 245h3v1h-3zM826 244h1v3h-1zM842 245h3v1h-3zM843 244h1v3h-1zM860 245h3v1h-3zM861 244h1v3h-1zM877 245h3v1h-3zM878 244h1v3h-1zM895 245h3v1h-3zM896 244h1v3h-1zM913 245h3v1h-3zM914 244h1v3h-1zM930 245h3v1h-3zM931 244h1v3h-1zM948 245h3v1h-3zM949 244h1v3h-1zM966 245h3v1h-3zM967 244h1v3h-1zM983 245h3v1h-3zM984 244h1v3h-1zM1001 245h3v1h-3zM1002 244h1v3h-1zM1019 245h3v1h-3zM1020 244h1v3h-1zM1036 245h3v1h-3zM1037 244h1v3h-1zM1054 245h3v1h-3zM1055 244h1v3h-1zM1072 245h3v1h-3zM1073 244h1v3h-1zM1089 245h3v1h-3zM1090 244h1v3h-1zM1107 245h3v1h-3zM1108 244h1v3h-1zM1124 245h3v1h-3zM1125 244h1v3h-1zM1142 245h3v1h-3zM1143 244h1v3h-1zM1160 245h3v1h-3zM1161 244h1v3h-1zM1177 245h3v1h-3zM1178 244h1v3h-1zM1195 245h3v1h-3zM1196 244h1v3h-1zM1213 245h3v1h-3zM1214 244h1v3h-1zM1230 245h3v1h-3zM1231 244h1v3h-1zM1248 245h3v1h-3zM1249 244h1v3h-1zM1266 245h3v1h-3zM1267 244h1v3h-1zM189 262h3v1h-3zM190 261h1v3h-1zM207 262h3v1h-3zM208 261h1v3h-1zM225 262h3v1h-3zM226 261h1v3h-1zM242 262h3v1h-3zM243 261h1v3h-1zM260 262h3v1h-3zM261 261h1v3h-1zM278 262h3v1h-3zM279 261h1v3h-1zM295 262h3v1h-3zM296 261h1v3h-1zM313 262h3v1h-3zM314 261h1v3h-1zM330 262h3v1h-3zM331 261h1v3h-1zM348 262h3v1h-3zM349 261h1v3h-1zM366 262h3v1h-3zM367 261h1v3h-1zM383 262h3v1h-3zM384 261h1v3h-1zM401 262h3v1h-3zM402 261h1v3h-1zM419 262h3v1h-3zM420 261h1v3h-1zM436 262h3v1h-3zM437 261h1v3h-1zM454 262h3v1h-3zM455 261h1v3h-1zM472 262h3v1h-3zM473 261h1v3h-1zM489 262h3v1h-3zM490 261h1v3h-1zM507 262h3v1h-3zM508 261h1v3h-1zM525 262h3v1h-3zM526 261h1v3h-1zM542 262h3v1h-3zM543 261h1v3h-1zM560 262h3v1h-3zM561 261h1v3h-1zM578 262h3v1h-3zM579 261h1v3h-1zM595 262h3v1h-3zM596 261h1v3h-1zM613 262h3v1h-3zM614 261h1v3h-1zM630 262h3v1h-3zM631 261h1v3h-1zM648 262h3v1h-3zM649 261h1v3h-1zM666 262h3v1h-3zM667 261h1v3h-1zM683 262h3v1h-3zM684 261h1v3h-1zM701 262h3v1h-3zM702 261h1v3h-1zM719 262h3v1h-3zM720 261h1v3h-1zM736 262h3v1h-3zM737 261h1v3h-1zM754 262h3v1h-3zM755 261h1v3h-1zM772 262h3v1h-3zM773 261h1v3h-1zM789 262h3v1h-3zM790 261h1v3h-1zM807 262h3v1h-3zM808 261h1v3h-1zM825 262h3v1h-3zM826 261h1v3h-1zM842 262h3v1h-3zM843 261h1v3h-1zM860 262h3v1h-3zM861 261h1v3h-1zM877 262h3v1h-3zM878 261h1v3h-1zM895 262h3v1h-3zM896 261h1v3h-1zM913 262h3v1h-3zM914 261h1v3h-1zM930 262h3v1h-3zM931 261h1v3h-1zM948 262h3v1h-3zM949 261h1v3h-1zM966 262h3v1h-3zM967 261h1v3h-1zM983 262h3v1h-3zM984 261h1v3h-1zM1001 262h3v1h-3zM1002 261h1v3h-1zM1019 262h3v1h-3zM1020 261h1v3h-1zM1036 262h3v1h-3zM1037 261h1v3h-1zM1054 262h3v1h-3zM1055 261h1v3h-1zM1072 262h3v1h-3zM1073 261h1v3h-1zM1089 262h3v1h-3zM1090 261h1v3h-1zM1107 262h3v1h-3zM1108 261h1v3h-1zM1124 262h3v1h-3zM1125 261h1v3h-1zM1142 262h3v1h-3zM1143 261h1v3h-1zM1160 262h3v1h-3zM1161 261h1v3h-1zM1177 262h3v1h-3zM1178 261h1v3h-1zM1195 262h3v1h-3zM1196 261h1v3h-1zM1213 262h3v1h-3zM1214 261h1v3h-1zM1230 262h3v1h-3zM1231 261h1v3h-1zM1248 262h3v1h-3zM1249 261h1v3h-1zM1266 262h3v1h-3zM1267 261h1v3h-1zM189 280h3v1h-3zM190 279h1v3h-1zM207 280h3v1h-3zM208 279h1v3h-1zM225 280h3v1h-3zM226 279h1v3h-1zM242 280h3v1h-3zM243 279h1v3h-1zM260 280h3v1h-3zM261 279h1v3h-1zM278 280h3v1h-3zM279 279h1v3h-1zM295 280h3v1h-3zM296 279h1v3h-1zM313 280h3v1h-3zM314 279h1v3h-1zM330 280h3v1h-3zM331 279h1v3h-1zM348 280h3v1h-3zM349 279h1v3h-1zM366 280h3v1h-3zM367 279h1v3h-1zM383 280h3v1h-3zM384 279h1v3h-1zM401 280h3v1h-3zM402 279h1v3h-1zM419 280h3v1h-3zM420 279h1v3h-1zM436 280h3v1h-3zM437 279h1v3h-1zM454 280h3v1h-3zM455 279h1v3h-1zM472 280h3v1h-3zM473 279h1v3h-1zM489 280h3v1h-3zM490 279h1v3h-1zM507 280h3v1h-3zM508 279h1v3h-1zM525 280h3v1h-3zM526 279h1v3h-1zM542 280h3v1h-3zM543 279h1v3h-1zM560 280h3v1h-3zM561 279h1v3h-1zM578 280h3v1h-3zM579 279h1v3h-1zM595 280h3v1h-3zM596 279h1v3h-1zM613 280h3v1h-3zM614 279h1v3h-1zM630 280h3v1h-3zM631 279h1v3h-1zM648 280h3v1h-3zM649 279h1v3h-1zM666 280h3v1h-3zM667 279h1v3h-1zM683 280h3v1h-3zM684 279h1v3h-1zM701 280h3v1h-3zM702 279h1v3h-1zM719 280h3v1h-3zM720 279h1v3h-1zM736 280h3v1h-3zM737 279h1v3h-1zM754 280h3v1h-3zM755 279h1v3h-1zM772 280h3v1h-3zM773 279h1v3h-1zM789 280h3v1h-3zM790 279h1v3h-1zM807 280h3v1h-3zM808 279h1v3h-1zM825 280h3v1h-3zM826 279h1v3h-1zM842 280h3v1h-3zM843 279h1v3h-1zM860 280h3v1h-3zM861 279h1v3h-1zM877 280h3v1h-3zM878 279h1v3h-1zM895 280h3v1h-3zM896 279h1v3h-1zM913 280h3v1h-3zM914 279h1v3h-1zM930 280h3v1h-3zM931 279h1v3h-1zM948 280h3v1h-3zM949 279h1v3h-1zM966 280h3v1h-3zM967 279h1v3h-1zM983 280h3v1h-3zM984 279h1v3h-1zM1001 280h3v1h-3zM1002 279h1v3h-1zM1019 280h3v1h-3zM1020 279h1v3h-1zM1036 280h3v1h-3zM1037 279h1v3h-1zM1054 280h3v1h-3zM1055 279h1v3h-1zM1072 280h3v1h-3zM1073 279h1v3h-1zM1089 280h3v1h-3zM1090 279h1v3h-1zM1107 280h3v1h-3zM1108 279h1v3h-1zM1124 280h3v1h-3zM1125 279h1v3h-1zM1142 280h3v1h-3zM1143 279h1v3h-1zM1160 280h3v1h-3zM1161 279h1v3h-1zM1177 280h3v1h-3zM1178 279h1v3h-1zM1195 280h3v1h-3zM1196 279h1v3h-1zM1213 280h3v1h-3zM1214 279h1v3h-1zM1230 280h3v1h-3zM1231 279h1v3h-1zM1248 280h3v1h-3zM1249 279h1v3h-1zM1266 280h3v1h-3zM1267 279h1v3h-1zM189 298h3v1h-3zM190 297h1v3h-1zM207 298h3v1h-3zM208 297h1v3h-1zM225 298h3v1h-3zM226 297h1v3h-1zM242 298h3v1h-3zM243 297h1v3h-1zM260 298h3v1h-3zM261 297h1v3h-1zM278 298h3v1h-3zM279 297h1v3h-1zM295 298h3v1h-3zM296 297h1v3h-1zM313 298h3v1h-3zM314 297h1v3h-1zM330 298h3v1h-3zM331 297h1v3h-1zM348 298h3v1h-3zM349 297h1v3h-1zM366 298h3v1h-3zM367 297h1v3h-1zM383 298h3v1h-3zM384 297h1v3h-1zM401 298h3v1h-3zM402 297h1v3h-1zM419 298h3v1h-3zM420 297h1v3h-1zM436 298h3v1h-3zM437 297h1v3h-1zM454 298h3v1h-3zM455 297h1v3h-1zM472 298h3v1h-3zM473 297h1v3h-1zM489 298h3v1h-3zM490 297h1v3h-1zM507 298h3v1h-3zM508 297h1v3h-1zM525 298h3v1h-3zM526 297h1v3h-1zM542 298h3v1h-3zM543 297h1v3h-1zM560 298h3v1h-3zM561 297h1v3h-1zM578 298h3v1h-3zM579 297h1v3h-1zM595 298h3v1h-3zM596 297h1v3h-1zM613 298h3v1h-3zM614 297h1v3h-1zM630 298h3v1h-3zM631 297h1v3h-1zM648 298h3v1h-3zM649 297h1v3h-1zM666 298h3v1h-3zM667 297h1v3h-1zM683 298h3v1h-3zM684 297h1v3h-1zM701 298h3v1h-3zM702 297h1v3h-1zM719 298h3v1h-3zM720 297h1v3h-1zM736 298h3v1h-3zM737 297h1v3h-1zM754 298h3v1h-3zM755 297h1v3h-1zM772 298h3v1h-3zM773 297h1v3h-1zM789 298h3v1h-3zM790 297h1v3h-1zM807 298h3v1h-3zM808 297h1v3h-1zM825 298h3v1h-3zM826 297h1v3h-1zM842 298h3v1h-3zM843 297h1v3h-1zM860 298h3v1h-3zM861 297h1v3h-1zM877 298h3v1h-3zM878 297h1v3h-1zM895 298h3v1h-3zM896 297h1v3h-1zM913 298h3v1h-3zM914 297h1v3h-1zM930 298h3v1h-3zM931 297h1v3h-1zM948 298h3v1h-3zM949 297h1v3h-1zM966 298h3v1h-3zM967 297h1v3h-1zM983 298h3v1h-3zM984 297h1v3h-1zM1001 298h3v1h-3zM1002 297h1v3h-1zM1019 298h3v1h-3zM1020 297h1v3h-1zM1036 298h3v1h-3zM1037 297h1v3h-1zM1054 298h3v1h-3zM1055 297h1v3h-1zM1072 298h3v1h-3zM1073 297h1v3h-1zM1089 298h3v1h-3zM1090 297h1v3h-1zM1107 298h3v1h-3zM1108 297h1v3h-1zM1124 298h3v1h-3zM1125 297h1v3h-1zM1142 298h3v1h-3zM1143 297h1v3h-1zM1160 298h3v1h-3zM1161 297h1v3h-1zM1177 298h3v1h-3zM1178 297h1v3h-1zM1195 298h3v1h-3zM1196 297h1v3h-1zM1213 298h3v1h-3zM1214 297h1v3h-1zM1230 298h3v1h-3zM1231 297h1v3h-1zM1248 298h3v1h-3zM1249 297h1v3h-1zM1266 298h3v1h-3zM1267 297h1v3h-1zM189 315h3v1h-3zM190 314h1v3h-1zM207 315h3v1h-3zM208 314h1v3h-1zM225 315h3v1h-3zM226 314h1v3h-1zM242 315h3v1h-3zM243 314h1v3h-1zM260 315h3v1h-3zM261 314h1v3h-1zM278 315h3v1h-3zM279 314h1v3h-1zM295 315h3v1h-3zM296 314h1v3h-1zM313 315h3v1h-3zM314 314h1v3h-1zM330 315h3v1h-3zM331 314h1v3h-1zM348 315h3v1h-3zM349 314h1v3h-1zM366 315h3v1h-3zM367 314h1v3h-1zM383 315h3v1h-3zM384 314h1v3h-1zM401 315h3v1h-3zM402 314h1v3h-1zM419 315h3v1h-3zM420 314h1v3h-1zM436 315h3v1h-3zM437 314h1v3h-1zM454 315h3v1h-3zM455 314h1v3h-1zM472 315h3v1h-3zM473 314h1v3h-1zM489 315h3v1h-3zM490 314h1v3h-1zM507 315h3v1h-3zM508 314h1v3h-1zM525 315h3v1h-3zM526 314h1v3h-1zM542 315h3v1h-3zM543 314h1v3h-1zM560 315h3v1h-3zM561 314h1v3h-1zM578 315h3v1h-3zM579 314h1v3h-1zM595 315h3v1h-3zM596 314h1v3h-1zM613 315h3v1h-3zM614 314h1v3h-1zM630 315h3v1h-3zM631 314h1v3h-1zM648 315h3v1h-3zM649 314h1v3h-1zM666 315h3v1h-3zM667 314h1v3h-1zM683 315h3v1h-3zM684 314h1v3h-1zM701 315h3v1h-3zM702 314h1v3h-1zM719 315h3v1h-3zM720 314h1v3h-1zM736 315h3v1h-3zM737 314h1v3h-1zM754 315h3v1h-3zM755 314h1v3h-1zM772 315h3v1h-3zM773 314h1v3h-1zM789 315h3v1h-3zM790 314h1v3h-1zM807 315h3v1h-3zM808 314h1v3h-1zM825 315h3v1h-3zM826 314h1v3h-1zM842 315h3v1h-3zM843 314h1v3h-1zM860 315h3v1h-3zM861 314h1v3h-1zM877 315h3v1h-3zM878 314h1v3h-1zM895 315h3v1h-3zM896 314h1v3h-1zM913 315h3v1h-3zM914 314h1v3h-1zM930 315h3v1h-3zM931 314h1v3h-1zM948 315h3v1h-3zM949 314h1v3h-1zM966 315h3v1h-3zM967 314h1v3h-1zM983 315h3v1h-3zM984 314h1v3h-1zM1001 315h3v1h-3zM1002 314h1v3h-1zM1019 315h3v1h-3zM1020 314h1v3h-1zM1036 315h3v1h-3zM1037 314h1v3h-1zM1054 315h3v1h-3zM1055 314h1v3h-1zM1072 315h3v1h-3zM1073 314h1v3h-1zM1089 315h3v1h-3zM1090 314h1v3h-1zM1107 315h3v1h-3zM1108 314h1v3h-1zM1124 315h3v1h-3zM1125 314h1v3h-1zM1142 315h3v1h-3zM1143 314h1v3h-1zM1160 315h3v1h-3zM1161 314h1v3h-1zM1177 315h3v1h-3zM1178 314h1v3h-1zM1195 315h3v1h-3zM1196 314h1v3h-1zM1213 315h3v1h-3zM1214 314h1v3h-1zM1230 315h3v1h-3zM1231 314h1v3h-1zM1248 315h3v1h-3zM1249 314h1v3h-1zM1266 315h3v1h-3zM1267 314h1v3h-1zM189 333h3v1h-3zM190 332h1v3h-1zM207 333h3v1h-3zM208 332h1v3h-1zM225 333h3v1h-3zM226 332h1v3h-1zM242 333h3v1h-3zM243 332h1v3h-1zM260 333h3v1h-3zM261 332h1v3h-1zM278 333h3v1h-3zM279 332h1v3h-1zM295 333h3v1h-3zM296 332h1v3h-1zM313 333h3v1h-3zM314 332h1v3h-1zM330 333h3v1h-3zM331 332h1v3h-1zM348 333h3v1h-3zM349 332h1v3h-1zM366 333h3v1h-3zM367 332h1v3h-1zM383 333h3v1h-3zM384 332h1v3h-1zM401 333h3v1h-3zM402 332h1v3h-1zM419 333h3v1h-3zM420 332h1v3h-1zM436 333h3v1h-3zM437 332h1v3h-1zM454 333h3v1h-3zM455 332h1v3h-1zM472 333h3v1h-3zM473 332h1v3h-1zM489 333h3v1h-3zM490 332h1v3h-1zM507 333h3v1h-3zM508 332h1v3h-1zM525 333h3v1h-3zM526 332h1v3h-1zM542 333h3v1h-3zM543 332h1v3h-1zM560 333h3v1h-3zM561 332h1v3h-1zM578 333h3v1h-3zM579 332h1v3h-1zM595 333h3v1h-3zM596 332h1v3h-1zM613 333h3v1h-3zM614 332h1v3h-1zM630 333h3v1h-3zM631 332h1v3h-1zM648 333h3v1h-3zM649 332h1v3h-1zM666 333h3v1h-3zM667 332h1v3h-1zM683 333h3v1h-3zM684 332h1v3h-1zM701 333h3v1h-3zM702 332h1v3h-1zM719 333h3v1h-3zM720 332h1v3h-1zM736 333h3v1h-3zM737 332h1v3h-1zM754 333h3v1h-3zM755 332h1v3h-1zM772 333h3v1h-3zM773 332h1v3h-1zM789 333h3v1h-3zM790 332h1v3h-1zM807 333h3v1h-3zM808 332h1v3h-1zM825 333h3v1h-3zM826 332h1v3h-1zM842 333h3v1h-3zM843 332h1v3h-1zM860 333h3v1h-3zM861 332h1v3h-1zM877 333h3v1h-3zM878 332h1v3h-1zM895 333h3v1h-3zM896 332h1v3h-1zM913 333h3v1h-3zM914 332h1v3h-1zM930 333h3v1h-3zM931 332h1v3h-1zM948 333h3v1h-3zM949 332h1v3h-1zM966 333h3v1h-3zM967 332h1v3h-1zM983 333h3v1h-3zM984 332h1v3h-1zM1001 333h3v1h-3zM1002 332h1v3h-1zM1019 333h3v1h-3zM1020 332h1v3h-1zM1036 333h3v1h-3zM1037 332h1v3h-1zM1054 333h3v1h-3zM1055 332h1v3h-1zM1072 333h3v1h-3zM1073 332h1v3h-1zM1089 333h3v1h-3zM1090 332h1v3h-1zM1107 333h3v1h-3zM1108 332h1v3h-1zM1124 333h3v1h-3zM1125 332h1v3h-1zM1142 333h3v1h-3zM1143 332h1v3h-1zM1160 333h3v1h-3zM1161 332h1v3h-1zM1177 333h3v1h-3zM1178 332h1v3h-1zM1195 333h3v1h-3zM1196 332h1v3h-1zM1213 333h3v1h-3zM1214 332h1v3h-1zM1230 333h3v1h-3zM1231 332h1v3h-1zM1248 333h3v1h-3zM1249 332h1v3h-1zM1266 333h3v1h-3zM1267 332h1v3h-1zM189 351h3v1h-3zM190 350h1v3h-1zM207 351h3v1h-3zM208 350h1v3h-1zM225 351h3v1h-3zM226 350h1v3h-1zM242 351h3v1h-3zM243 350h1v3h-1zM260 351h3v1h-3zM261 350h1v3h-1zM278 351h3v1h-3zM279 350h1v3h-1zM295 351h3v1h-3zM296 350h1v3h-1zM313 351h3v1h-3zM314 350h1v3h-1zM330 351h3v1h-3zM331 350h1v3h-1zM348 351h3v1h-3zM349 350h1v3h-1zM366 351h3v1h-3zM367 350h1v3h-1zM383 351h3v1h-3zM384 350h1v3h-1zM401 351h3v1h-3zM402 350h1v3h-1zM419 351h3v1h-3zM420 350h1v3h-1zM436 351h3v1h-3zM437 350h1v3h-1zM454 351h3v1h-3zM455 350h1v3h-1zM472 351h3v1h-3zM473 350h1v3h-1zM489 351h3v1h-3zM490 350h1v3h-1zM507 351h3v1h-3zM508 350h1v3h-1zM525 351h3v1h-3zM526 350h1v3h-1zM542 351h3v1h-3zM543 350h1v3h-1zM560 351h3v1h-3zM561 350h1v3h-1zM578 351h3v1h-3zM579 350h1v3h-1zM595 351h3v1h-3zM596 350h1v3h-1zM613 351h3v1h-3zM614 350h1v3h-1zM630 351h3v1h-3zM631 350h1v3h-1zM648 351h3v1h-3zM649 350h1v3h-1zM666 351h3v1h-3zM667 350h1v3h-1zM683 351h3v1h-3zM684 350h1v3h-1zM701 351h3v1h-3zM702 350h1v3h-1zM719 351h3v1h-3zM720 350h1v3h-1zM736 351h3v1h-3zM737 350h1v3h-1zM754 351h3v1h-3zM755 350h1v3h-1zM772 351h3v1h-3zM773 350h1v3h-1zM789 351h3v1h-3zM790 350h1v3h-1zM807 351h3v1h-3zM808 350h1v3h-1zM825 351h3v1h-3zM826 350h1v3h-1zM842 351h3v1h-3zM843 350h1v3h-1zM860 351h3v1h-3zM861 350h1v3h-1zM877 351h3v1h-3zM878 350h1v3h-1zM895 351h3v1h-3zM896 350h1v3h-1zM913 351h3v1h-3zM914 350h1v3h-1zM930 351h3v1h-3zM931 350h1v3h-1zM948 351h3v1h-3zM949 350h1v3h-1zM966 351h3v1h-3zM967 350h1v3h-1zM983 351h3v1h-3zM984 350h1v3h-1zM1001 351h3v1h-3zM1002 350h1v3h-1zM1019 351h3v1h-3zM1020 350h1v3h-1zM1036 351h3v1h-3zM1037 350h1v3h-1zM1054 351h3v1h-3zM1055 350h1v3h-1zM1072 351h3v1h-3zM1073 350h1v3h-1zM1089 351h3v1h-3zM1090 350h1v3h-1zM1107 351h3v1h-3zM1108 350h1v3h-1zM1124 351h3v1h-3zM1125 350h1v3h-1zM1142 351h3v1h-3zM1143 350h1v3h-1zM1160 351h3v1h-3zM1161 350h1v3h-1zM1177 351h3v1h-3zM1178 350h1v3h-1zM1195 351h3v1h-3zM1196 350h1v3h-1zM1213 351h3v1h-3zM1214 350h1v3h-1zM1230 351h3v1h-3zM1231 350h1v3h-1zM1248 351h3v1h-3zM1249 350h1v3h-1zM1266 351h3v1h-3zM1267 350h1v3h-1zM189 368h3v1h-3zM190 367h1v3h-1zM207 368h3v1h-3zM208 367h1v3h-1zM225 368h3v1h-3zM226 367h1v3h-1zM242 368h3v1h-3zM243 367h1v3h-1zM260 368h3v1h-3zM261 367h1v3h-1zM278 368h3v1h-3zM279 367h1v3h-1zM295 368h3v1h-3zM296 367h1v3h-1zM313 368h3v1h-3zM314 367h1v3h-1zM330 368h3v1h-3zM331 367h1v3h-1zM348 368h3v1h-3zM349 367h1v3h-1zM366 368h3v1h-3zM367 367h1v3h-1zM383 368h3v1h-3zM384 367h1v3h-1zM401 368h3v1h-3zM402 367h1v3h-1zM419 368h3v1h-3zM420 367h1v3h-1zM436 368h3v1h-3zM437 367h1v3h-1zM454 368h3v1h-3zM455 367h1v3h-1zM472 368h3v1h-3zM473 367h1v3h-1zM489 368h3v1h-3zM490 367h1v3h-1zM507 368h3v1h-3zM508 367h1v3h-1zM525 368h3v1h-3zM526 367h1v3h-1zM542 368h3v1h-3zM543 367h1v3h-1zM560 368h3v1h-3zM561 367h1v3h-1zM578 368h3v1h-3zM579 367h1v3h-1zM595 368h3v1h-3zM596 367h1v3h-1zM613 368h3v1h-3zM614 367h1v3h-1zM630 368h3v1h-3zM631 367h1v3h-1zM648 368h3v1h-3zM649 367h1v3h-1zM666 368h3v1h-3zM667 367h1v3h-1zM683 368h3v1h-3zM684 367h1v3h-1zM701 368h3v1h-3zM702 367h1v3h-1zM719 368h3v1h-3zM720 367h1v3h-1zM736 368h3v1h-3zM737 367h1v3h-1zM754 368h3v1h-3zM755 367h1v3h-1zM772 368h3v1h-3zM773 367h1v3h-1zM789 368h3v1h-3zM790 367h1v3h-1zM807 368h3v1h-3zM808 367h1v3h-1zM825 368h3v1h-3zM826 367h1v3h-1zM842 368h3v1h-3zM843 367h1v3h-1zM860 368h3v1h-3zM861 367h1v3h-1zM877 368h3v1h-3zM878 367h1v3h-1zM895 368h3v1h-3zM896 367h1v3h-1zM913 368h3v1h-3zM914 367h1v3h-1zM930 368h3v1h-3zM931 367h1v3h-1zM948 368h3v1h-3zM949 367h1v3h-1zM966 368h3v1h-3zM967 367h1v3h-1zM983 368h3v1h-3zM984 367h1v3h-1zM1001 368h3v1h-3zM1002 367h1v3h-1zM1019 368h3v1h-3zM1020 367h1v3h-1zM1036 368h3v1h-3zM1037 367h1v3h-1zM1054 368h3v1h-3zM1055 367h1v3h-1zM1072 368h3v1h-3zM1073 367h1v3h-1zM1089 368h3v1h-3zM1090 367h1v3h-1zM1107 368h3v1h-3zM1108 367h1v3h-1zM1124 368h3v1h-3zM1125 367h1v3h-1zM1142 368h3v1h-3zM1143 367h1v3h-1zM1160 368h3v1h-3zM1161 367h1v3h-1zM1177 368h3v1h-3zM1178 367h1v3h-1zM1195 368h3v1h-3zM1196 367h1v3h-1zM1213 368h3v1h-3zM1214 367h1v3h-1zM1230 368h3v1h-3zM1231 367h1v3h-1zM1248 368h3v1h-3zM1249 367h1v3h-1zM1266 368h3v1h-3zM1267 367h1v3h-1zM189 386h3v1h-3zM190 385h1v3h-1zM207 386h3v1h-3zM208 385h1v3h-1zM225 386h3v1h-3zM226 385h1v3h-1zM242 386h3v1h-3zM243 385h1v3h-1zM260 386h3v1h-3zM261 385h1v3h-1zM278 386h3v1h-3zM279 385h1v3h-1zM295 386h3v1h-3zM296 385h1v3h-1zM313 386h3v1h-3zM314 385h1v3h-1zM330 386h3v1h-3zM331 385h1v3h-1zM348 386h3v1h-3zM349 385h1v3h-1zM366 386h3v1h-3zM367 385h1v3h-1zM383 386h3v1h-3zM384 385h1v3h-1zM401 386h3v1h-3zM402 385h1v3h-1zM419 386h3v1h-3zM420 385h1v3h-1zM436 386h3v1h-3zM437 385h1v3h-1zM454 386h3v1h-3zM455 385h1v3h-1zM472 386h3v1h-3zM473 385h1v3h-1zM489 386h3v1h-3zM490 385h1v3h-1zM507 386h3v1h-3zM508 385h1v3h-1zM525 386h3v1h-3zM526 385h1v3h-1zM542 386h3v1h-3zM543 385h1v3h-1zM560 386h3v1h-3zM561 385h1v3h-1zM578 386h3v1h-3zM579 385h1v3h-1zM595 386h3v1h-3zM596 385h1v3h-1zM613 386h3v1h-3zM614 385h1v3h-1zM630 386h3v1h-3zM631 385h1v3h-1zM648 386h3v1h-3zM649 385h1v3h-1zM666 386h3v1h-3zM667 385h1v3h-1zM683 386h3v1h-3zM684 385h1v3h-1zM701 386h3v1h-3zM702 385h1v3h-1zM719 386h3v1h-3zM720 385h1v3h-1zM736 386h3v1h-3zM737 385h1v3h-1zM754 386h3v1h-3zM755 385h1v3h-1zM772 386h3v1h-3zM773 385h1v3h-1zM789 386h3v1h-3zM790 385h1v3h-1zM807 386h3v1h-3zM808 385h1v3h-1zM825 386h3v1h-3zM826 385h1v3h-1zM842 386h3v1h-3zM843 385h1v3h-1zM860 386h3v1h-3zM861 385h1v3h-1zM877 386h3v1h-3zM878 385h1v3h-1zM895 386h3v1h-3zM896 385h1v3h-1zM913 386h3v1h-3zM914 385h1v3h-1zM930 386h3v1h-3zM931 385h1v3h-1zM948 386h3v1h-3zM949 385h1v3h-1zM966 386h3v1h-3zM967 385h1v3h-1zM983 386h3v1h-3zM984 385h1v3h-1zM1001 386h3v1h-3zM1002 385h1v3h-1zM1019 386h3v1h-3zM1020 385h1v3h-1zM1036 386h3v1h-3zM1037 385h1v3h-1zM1054 386h3v1h-3zM1055 385h1v3h-1zM1072 386h3v1h-3zM1073 385h1v3h-1zM1089 386h3v1h-3zM1090 385h1v3h-1zM1107 386h3v1h-3zM1108 385h1v3h-1zM1124 386h3v1h-3zM1125 385h1v3h-1zM1142 386h3v1h-3zM1143 385h1v3h-1zM1160 386h3v1h-3zM1161 385h1v3h-1zM1177 386h3v1h-3zM1178 385h1v3h-1zM1195 386h3v1h-3zM1196 385h1v3h-1zM1213 386h3v1h-3zM1214 385h1v3h-1zM1230 386h3v1h-3zM1231 385h1v3h-1zM1248 386h3v1h-3zM1249 385h1v3h-1zM1266 386h3v1h-3zM1267 385h1v3h-1zM189 404h3v1h-3zM190 403h1v3h-1zM207 404h3v1h-3zM208 403h1v3h-1zM225 404h3v1h-3zM226 403h1v3h-1zM242 404h3v1h-3zM243 403h1v3h-1zM260 404h3v1h-3zM261 403h1v3h-1zM278 404h3v1h-3zM279 403h1v3h-1zM295 404h3v1h-3zM296 403h1v3h-1zM313 404h3v1h-3zM314 403h1v3h-1zM330 404h3v1h-3zM331 403h1v3h-1zM348 404h3v1h-3zM349 403h1v3h-1zM366 404h3v1h-3zM367 403h1v3h-1zM383 404h3v1h-3zM384 403h1v3h-1zM401 404h3v1h-3zM402 403h1v3h-1zM419 404h3v1h-3zM420 403h1v3h-1zM436 404h3v1h-3zM437 403h1v3h-1zM454 404h3v1h-3zM455 403h1v3h-1zM472 404h3v1h-3zM473 403h1v3h-1zM489 404h3v1h-3zM490 403h1v3h-1zM507 404h3v1h-3zM508 403h1v3h-1zM525 404h3v1h-3zM526 403h1v3h-1zM542 404h3v1h-3zM543 403h1v3h-1zM560 404h3v1h-3zM561 403h1v3h-1zM578 404h3v1h-3zM579 403h1v3h-1zM595 404h3v1h-3zM596 403h1v3h-1zM613 404h3v1h-3zM614 403h1v3h-1zM630 404h3v1h-3zM631 403h1v3h-1zM648 404h3v1h-3zM649 403h1v3h-1zM666 404h3v1h-3zM667 403h1v3h-1zM683 404h3v1h-3zM684 403h1v3h-1zM701 404h3v1h-3zM702 403h1v3h-1zM719 404h3v1h-3zM720 403h1v3h-1zM736 404h3v1h-3zM737 403h1v3h-1zM754 404h3v1h-3zM755 403h1v3h-1zM772 404h3v1h-3zM773 403h1v3h-1zM789 404h3v1h-3zM790 403h1v3h-1zM807 404h3v1h-3zM808 403h1v3h-1zM825 404h3v1h-3zM826 403h1v3h-1zM842 404h3v1h-3zM843 403h1v3h-1zM860 404h3v1h-3zM861 403h1v3h-1zM877 404h3v1h-3zM878 403h1v3h-1zM895 404h3v1h-3zM896 403h1v3h-1zM913 404h3v1h-3zM914 403h1v3h-1zM930 404h3v1h-3zM931 403h1v3h-1zM948 404h3v1h-3zM949 403h1v3h-1zM966 404h3v1h-3zM967 403h1v3h-1zM983 404h3v1h-3zM984 403h1v3h-1zM1001 404h3v1h-3zM1002 403h1v3h-1zM1019 404h3v1h-3zM1020 403h1v3h-1zM1036 404h3v1h-3zM1037 403h1v3h-1zM1054 404h3v1h-3zM1055 403h1v3h-1zM1072 404h3v1h-3zM1073 403h1v3h-1zM1089 404h3v1h-3zM1090 403h1v3h-1zM1107 404h3v1h-3zM1108 403h1v3h-1zM1124 404h3v1h-3zM1125 403h1v3h-1zM1142 404h3v1h-3zM1143 403h1v3h-1zM1160 404h3v1h-3zM1161 403h1v3h-1zM1177 404h3v1h-3zM1178 403h1v3h-1zM1195 404h3v1h-3zM1196 403h1v3h-1zM1213 404h3v1h-3zM1214 403h1v3h-1zM1230 404h3v1h-3zM1231 403h1v3h-1zM1248 404h3v1h-3zM1249 403h1v3h-1zM1266 404h3v1h-3zM1267 403h1v3h-1zM189 421h3v1h-3zM190 420h1v3h-1zM207 421h3v1h-3zM208 420h1v3h-1zM225 421h3v1h-3zM226 420h1v3h-1zM242 421h3v1h-3zM243 420h1v3h-1zM260 421h3v1h-3zM261 420h1v3h-1zM278 421h3v1h-3zM279 420h1v3h-1zM295 421h3v1h-3zM296 420h1v3h-1zM313 421h3v1h-3zM314 420h1v3h-1zM330 421h3v1h-3zM331 420h1v3h-1zM348 421h3v1h-3zM349 420h1v3h-1zM366 421h3v1h-3zM367 420h1v3h-1zM383 421h3v1h-3zM384 420h1v3h-1zM401 421h3v1h-3zM402 420h1v3h-1zM419 421h3v1h-3zM420 420h1v3h-1zM436 421h3v1h-3zM437 420h1v3h-1zM454 421h3v1h-3zM455 420h1v3h-1zM472 421h3v1h-3zM473 420h1v3h-1zM489 421h3v1h-3zM490 420h1v3h-1zM507 421h3v1h-3zM508 420h1v3h-1zM525 421h3v1h-3zM526 420h1v3h-1zM542 421h3v1h-3zM543 420h1v3h-1zM560 421h3v1h-3zM561 420h1v3h-1zM578 421h3v1h-3zM579 420h1v3h-1zM595 421h3v1h-3zM596 420h1v3h-1zM613 421h3v1h-3zM614 420h1v3h-1zM630 421h3v1h-3zM631 420h1v3h-1zM648 421h3v1h-3zM649 420h1v3h-1zM666 421h3v1h-3zM667 420h1v3h-1zM683 421h3v1h-3zM684 420h1v3h-1zM701 421h3v1h-3zM702 420h1v3h-1zM719 421h3v1h-3zM720 420h1v3h-1zM736 421h3v1h-3zM737 420h1v3h-1zM754 421h3v1h-3zM755 420h1v3h-1zM772 421h3v1h-3zM773 420h1v3h-1zM789 421h3v1h-3zM790 420h1v3h-1zM807 421h3v1h-3zM808 420h1v3h-1zM825 421h3v1h-3zM826 420h1v3h-1zM842 421h3v1h-3zM843 420h1v3h-1zM860 421h3v1h-3zM861 420h1v3h-1zM877 421h3v1h-3zM878 420h1v3h-1zM895 421h3v1h-3zM896 420h1v3h-1zM913 421h3v1h-3zM914 420h1v3h-1zM930 421h3v1h-3zM931 420h1v3h-1zM948 421h3v1h-3zM949 420h1v3h-1zM966 421h3v1h-3zM967 420h1v3h-1zM983 421h3v1h-3zM984 420h1v3h-1zM1001 421h3v1h-3zM1002 420h1v3h-1zM1019 421h3v1h-3zM1020 420h1v3h-1zM1036 421h3v1h-3zM1037 420h1v3h-1zM1054 421h3v1h-3zM1055 420h1v3h-1zM1072 421h3v1h-3zM1073 420h1v3h-1zM1089 421h3v1h-3zM1090 420h1v3h-1zM1107 421h3v1h-3zM1108 420h1v3h-1zM1124 421h3v1h-3zM1125 420h1v3h-1zM1142 421h3v1h-3zM1143 420h1v3h-1zM1160 421h3v1h-3zM1161 420h1v3h-1zM1177 421h3v1h-3zM1178 420h1v3h-1zM1195 421h3v1h-3zM1196 420h1v3h-1zM1213 421h3v1h-3zM1214 420h1v3h-1zM1230 421h3v1h-3zM1231 420h1v3h-1zM1248 421h3v1h-3zM1249 420h1v3h-1zM1266 421h3v1h-3zM1267 420h1v3h-1zM189 439h3v1h-3zM190 438h1v3h-1zM207 439h3v1h-3zM208 438h1v3h-1zM225 439h3v1h-3zM226 438h1v3h-1zM242 439h3v1h-3zM243 438h1v3h-1zM260 439h3v1h-3zM261 438h1v3h-1zM278 439h3v1h-3zM279 438h1v3h-1zM295 439h3v1h-3zM296 438h1v3h-1zM313 439h3v1h-3zM314 438h1v3h-1zM330 439h3v1h-3zM331 438h1v3h-1zM348 439h3v1h-3zM349 438h1v3h-1zM366 439h3v1h-3zM367 438h1v3h-1zM383 439h3v1h-3zM384 438h1v3h-1zM401 439h3v1h-3zM402 438h1v3h-1zM419 439h3v1h-3zM420 438h1v3h-1zM436 439h3v1h-3zM437 438h1v3h-1zM454 439h3v1h-3zM455 438h1v3h-1zM472 439h3v1h-3zM473 438h1v3h-1zM489 439h3v1h-3zM490 438h1v3h-1zM507 439h3v1h-3zM508 438h1v3h-1zM525 439h3v1h-3zM526 438h1v3h-1zM542 439h3v1h-3zM543 438h1v3h-1zM560 439h3v1h-3zM561 438h1v3h-1zM578 439h3v1h-3zM579 438h1v3h-1zM595 439h3v1h-3zM596 438h1v3h-1zM613 439h3v1h-3zM614 438h1v3h-1zM630 439h3v1h-3zM631 438h1v3h-1zM648 439h3v1h-3zM649 438h1v3h-1zM666 439h3v1h-3zM667 438h1v3h-1zM683 439h3v1h-3zM684 438h1v3h-1zM701 439h3v1h-3zM702 438h1v3h-1zM719 439h3v1h-3zM720 438h1v3h-1zM736 439h3v1h-3zM737 438h1v3h-1zM754 439h3v1h-3zM755 438h1v3h-1zM772 439h3v1h-3zM773 438h1v3h-1zM789 439h3v1h-3zM790 438h1v3h-1zM807 439h3v1h-3zM808 438h1v3h-1zM825 439h3v1h-3zM826 438h1v3h-1zM842 439h3v1h-3zM843 438h1v3h-1zM860 439h3v1h-3zM861 438h1v3h-1zM877 439h3v1h-3zM878 438h1v3h-1zM895 439h3v1h-3zM896 438h1v3h-1zM913 439h3v1h-3zM914 438h1v3h-1zM930 439h3v1h-3zM931 438h1v3h-1zM948 439h3v1h-3zM949 438h1v3h-1zM966 439h3v1h-3zM967 438h1v3h-1zM983 439h3v1h-3zM984 438h1v3h-1zM1001 439h3v1h-3zM1002 438h1v3h-1zM1019 439h3v1h-3zM1020 438h1v3h-1zM1036 439h3v1h-3zM1037 438h1v3h-1zM1054 439h3v1h-3zM1055 438h1v3h-1zM1072 439h3v1h-3zM1073 438h1v3h-1zM1089 439h3v1h-3zM1090 438h1v3h-1zM1107 439h3v1h-3zM1108 438h1v3h-1zM1124 439h3v1h-3zM1125 438h1v3h-1zM1142 439h3v1h-3zM1143 438h1v3h-1zM1160 439h3v1h-3zM1161 438h1v3h-1zM1177 439h3v1h-3zM1178 438h1v3h-1zM1195 439h3v1h-3zM1196 438h1v3h-1zM1213 439h3v1h-3zM1214 438h1v3h-1zM1230 439h3v1h-3zM1231 438h1v3h-1zM1248 439h3v1h-3zM1249 438h1v3h-1zM1266 439h3v1h-3zM1267 438h1v3h-1zM189 456h3v1h-3zM190 455h1v3h-1zM207 456h3v1h-3zM208 455h1v3h-1zM225 456h3v1h-3zM226 455h1v3h-1zM242 456h3v1h-3zM243 455h1v3h-1zM260 456h3v1h-3zM261 455h1v3h-1zM278 456h3v1h-3zM279 455h1v3h-1zM295 456h3v1h-3zM296 455h1v3h-1zM313 456h3v1h-3zM314 455h1v3h-1zM330 456h3v1h-3zM331 455h1v3h-1zM348 456h3v1h-3zM349 455h1v3h-1zM366 456h3v1h-3zM367 455h1v3h-1zM383 456h3v1h-3zM384 455h1v3h-1zM401 456h3v1h-3zM402 455h1v3h-1zM419 456h3v1h-3zM420 455h1v3h-1zM436 456h3v1h-3zM437 455h1v3h-1zM454 456h3v1h-3zM455 455h1v3h-1zM472 456h3v1h-3zM473 455h1v3h-1zM489 456h3v1h-3zM490 455h1v3h-1zM507 456h3v1h-3zM508 455h1v3h-1zM525 456h3v1h-3zM526 455h1v3h-1zM542 456h3v1h-3zM543 455h1v3h-1zM560 456h3v1h-3zM561 455h1v3h-1zM578 456h3v1h-3zM579 455h1v3h-1zM595 456h3v1h-3zM596 455h1v3h-1zM613 456h3v1h-3zM614 455h1v3h-1zM630 456h3v1h-3zM631 455h1v3h-1zM648 456h3v1h-3zM649 455h1v3h-1zM666 456h3v1h-3zM667 455h1v3h-1zM683 456h3v1h-3zM684 455h1v3h-1zM701 456h3v1h-3zM702 455h1v3h-1zM719 456h3v1h-3zM720 455h1v3h-1zM736 456h3v1h-3zM737 455h1v3h-1zM754 456h3v1h-3zM755 455h1v3h-1zM772 456h3v1h-3zM773 455h1v3h-1zM789 456h3v1h-3zM790 455h1v3h-1zM807 456h3v1h-3zM808 455h1v3h-1zM825 456h3v1h-3zM826 455h1v3h-1zM842 456h3v1h-3zM843 455h1v3h-1zM860 456h3v1h-3zM861 455h1v3h-1zM877 456h3v1h-3zM878 455h1v3h-1zM895 456h3v1h-3zM896 455h1v3h-1zM913 456h3v1h-3zM914 455h1v3h-1zM930 456h3v1h-3zM931 455h1v3h-1zM948 456h3v1h-3zM949 455h1v3h-1zM966 456h3v1h-3zM967 455h1v3h-1zM983 456h3v1h-3zM984 455h1v3h-1zM1001 456h3v1h-3zM1002 455h1v3h-1zM1019 456h3v1h-3zM1020 455h1v3h-1zM1036 456h3v1h-3zM1037 455h1v3h-1zM1054 456h3v1h-3zM1055 455h1v3h-1zM1072 456h3v1h-3zM1073 455h1v3h-1zM1089 456h3v1h-3zM1090 455h1v3h-1zM1107 456h3v1h-3zM1108 455h1v3h-1zM1124 456h3v1h-3zM1125 455h1v3h-1zM1142 456h3v1h-3zM1143 455h1v3h-1zM1160 456h3v1h-3zM1161 455h1v3h-1zM1177 456h3v1h-3zM1178 455h1v3h-1zM1195 456h3v1h-3zM1196 455h1v3h-1zM1213 456h3v1h-3zM1214 455h1v3h-1zM1230 456h3v1h-3zM1231 455h1v3h-1zM1248 456h3v1h-3zM1249 455h1v3h-1zM1266 456h3v1h-3zM1267 455h1v3h-1zM189 474h3v1h-3zM190 473h1v3h-1zM207 474h3v1h-3zM208 473h1v3h-1zM225 474h3v1h-3zM226 473h1v3h-1zM242 474h3v1h-3zM243 473h1v3h-1zM260 474h3v1h-3zM261 473h1v3h-1zM278 474h3v1h-3zM279 473h1v3h-1zM295 474h3v1h-3zM296 473h1v3h-1zM313 474h3v1h-3zM314 473h1v3h-1zM330 474h3v1h-3zM331 473h1v3h-1zM348 474h3v1h-3zM349 473h1v3h-1zM366 474h3v1h-3zM367 473h1v3h-1zM383 474h3v1h-3zM384 473h1v3h-1zM401 474h3v1h-3zM402 473h1v3h-1zM419 474h3v1h-3zM420 473h1v3h-1zM436 474h3v1h-3zM437 473h1v3h-1zM454 474h3v1h-3zM455 473h1v3h-1zM472 474h3v1h-3zM473 473h1v3h-1zM489 474h3v1h-3zM490 473h1v3h-1zM507 474h3v1h-3zM508 473h1v3h-1zM525 474h3v1h-3zM526 473h1v3h-1zM542 474h3v1h-3zM543 473h1v3h-1zM560 474h3v1h-3zM561 473h1v3h-1zM578 474h3v1h-3zM579 473h1v3h-1zM595 474h3v1h-3zM596 473h1v3h-1zM613 474h3v1h-3zM614 473h1v3h-1zM630 474h3v1h-3zM631 473h1v3h-1zM648 474h3v1h-3zM649 473h1v3h-1zM666 474h3v1h-3zM667 473h1v3h-1zM683 474h3v1h-3zM684 473h1v3h-1zM701 474h3v1h-3zM702 473h1v3h-1zM719 474h3v1h-3zM720 473h1v3h-1zM736 474h3v1h-3zM737 473h1v3h-1zM754 474h3v1h-3zM755 473h1v3h-1zM772 474h3v1h-3zM773 473h1v3h-1zM789 474h3v1h-3zM790 473h1v3h-1zM807 474h3v1h-3zM808 473h1v3h-1zM825 474h3v1h-3zM826 473h1v3h-1zM842 474h3v1h-3zM843 473h1v3h-1zM860 474h3v1h-3zM861 473h1v3h-1zM877 474h3v1h-3zM878 473h1v3h-1zM895 474h3v1h-3zM896 473h1v3h-1zM913 474h3v1h-3zM914 473h1v3h-1zM930 474h3v1h-3zM931 473h1v3h-1zM948 474h3v1h-3zM949 473h1v3h-1zM966 474h3v1h-3zM967 473h1v3h-1zM983 474h3v1h-3zM984 473h1v3h-1zM1001 474h3v1h-3zM1002 473h1v3h-1zM1019 474h3v1h-3zM1020 473h1v3h-1zM1036 474h3v1h-3zM1037 473h1v3h-1zM1054 474h3v1h-3zM1055 473h1v3h-1zM1072 474h3v1h-3zM1073 473h1v3h-1zM1089 474h3v1h-3zM1090 473h1v3h-1zM1107 474h3v1h-3zM1108 473h1v3h-1zM1124 474h3v1h-3zM1125 473h1v3h-1zM1142 474h3v1h-3zM1143 473h1v3h-1zM1160 474h3v1h-3zM1161 473h1v3h-1zM1177 474h3v1h-3zM1178 473h1v3h-1zM1195 474h3v1h-3zM1196 473h1v3h-1zM1213 474h3v1h-3zM1214 473h1v3h-1zM1230 474h3v1h-3zM1231 473h1v3h-1zM1248 474h3v1h-3zM1249 473h1v3h-1zM1266 474h3v1h-3zM1267 473h1v3h-1zM189 492h3v1h-3zM190 491h1v3h-1zM207 492h3v1h-3zM208 491h1v3h-1zM225 492h3v1h-3zM226 491h1v3h-1zM242 492h3v1h-3zM243 491h1v3h-1zM260 492h3v1h-3zM261 491h1v3h-1zM278 492h3v1h-3zM279 491h1v3h-1zM295 492h3v1h-3zM296 491h1v3h-1zM313 492h3v1h-3zM314 491h1v3h-1zM330 492h3v1h-3zM331 491h1v3h-1zM348 492h3v1h-3zM349 491h1v3h-1zM366 492h3v1h-3zM367 491h1v3h-1zM383 492h3v1h-3zM384 491h1v3h-1zM401 492h3v1h-3zM402 491h1v3h-1zM419 492h3v1h-3zM420 491h1v3h-1zM436 492h3v1h-3zM437 491h1v3h-1zM454 492h3v1h-3zM455 491h1v3h-1zM472 492h3v1h-3zM473 491h1v3h-1zM489 492h3v1h-3zM490 491h1v3h-1zM507 492h3v1h-3zM508 491h1v3h-1zM525 492h3v1h-3zM526 491h1v3h-1zM542 492h3v1h-3zM543 491h1v3h-1zM560 492h3v1h-3zM561 491h1v3h-1zM578 492h3v1h-3zM579 491h1v3h-1zM595 492h3v1h-3zM596 491h1v3h-1zM613 492h3v1h-3zM614 491h1v3h-1zM630 492h3v1h-3zM631 491h1v3h-1zM648 492h3v1h-3zM649 491h1v3h-1zM666 492h3v1h-3zM667 491h1v3h-1zM683 492h3v1h-3zM684 491h1v3h-1zM701 492h3v1h-3zM702 491h1v3h-1zM719 492h3v1h-3zM720 491h1v3h-1zM736 492h3v1h-3zM737 491h1v3h-1zM754 492h3v1h-3zM755 491h1v3h-1zM772 492h3v1h-3zM773 491h1v3h-1zM789 492h3v1h-3zM790 491h1v3h-1zM807 492h3v1h-3zM808 491h1v3h-1zM825 492h3v1h-3zM826 491h1v3h-1zM842 492h3v1h-3zM843 491h1v3h-1zM860 492h3v1h-3zM861 491h1v3h-1zM877 492h3v1h-3zM878 491h1v3h-1zM895 492h3v1h-3zM896 491h1v3h-1zM913 492h3v1h-3zM914 491h1v3h-1zM930 492h3v1h-3zM931 491h1v3h-1zM948 492h3v1h-3zM949 491h1v3h-1zM966 492h3v1h-3zM967 491h1v3h-1zM983 492h3v1h-3zM984 491h1v3h-1zM1001 492h3v1h-3zM1002 491h1v3h-1zM1019 492h3v1h-3zM1020 491h1v3h-1zM1036 492h3v1h-3zM1037 491h1v3h-1zM1054 492h3v1h-3zM1055 491h1v3h-1zM1072 492h3v1h-3zM1073 491h1v3h-1zM1089 492h3v1h-3zM1090 491h1v3h-1zM1107 492h3v1h-3zM1108 491h1v3h-1zM1124 492h3v1h-3zM1125 491h1v3h-1zM1142 492h3v1h-3zM1143 491h1v3h-1zM1160 492h3v1h-3zM1161 491h1v3h-1zM1177 492h3v1h-3zM1178 491h1v3h-1zM1195 492h3v1h-3zM1196 491h1v3h-1zM1213 492h3v1h-3zM1214 491h1v3h-1zM1230 492h3v1h-3zM1231 491h1v3h-1zM1248 492h3v1h-3zM1249 491h1v3h-1zM1266 492h3v1h-3zM1267 491h1v3h-1zM189 509h3v1h-3zM190 508h1v3h-1zM207 509h3v1h-3zM208 508h1v3h-1zM225 509h3v1h-3zM226 508h1v3h-1zM242 509h3v1h-3zM243 508h1v3h-1zM260 509h3v1h-3zM261 508h1v3h-1zM278 509h3v1h-3zM279 508h1v3h-1zM295 509h3v1h-3zM296 508h1v3h-1zM313 509h3v1h-3zM314 508h1v3h-1zM330 509h3v1h-3zM331 508h1v3h-1zM348 509h3v1h-3zM349 508h1v3h-1zM366 509h3v1h-3zM367 508h1v3h-1zM383 509h3v1h-3zM384 508h1v3h-1zM401 509h3v1h-3zM402 508h1v3h-1zM419 509h3v1h-3zM420 508h1v3h-1zM436 509h3v1h-3zM437 508h1v3h-1zM454 509h3v1h-3zM455 508h1v3h-1zM472 509h3v1h-3zM473 508h1v3h-1zM489 509h3v1h-3zM490 508h1v3h-1zM507 509h3v1h-3zM508 508h1v3h-1zM525 509h3v1h-3zM526 508h1v3h-1zM542 509h3v1h-3zM543 508h1v3h-1zM560 509h3v1h-3zM561 508h1v3h-1zM578 509h3v1h-3zM579 508h1v3h-1zM595 509h3v1h-3zM596 508h1v3h-1zM613 509h3v1h-3zM614 508h1v3h-1zM630 509h3v1h-3zM631 508h1v3h-1zM648 509h3v1h-3zM649 508h1v3h-1zM666 509h3v1h-3zM667 508h1v3h-1zM683 509h3v1h-3zM684 508h1v3h-1zM701 509h3v1h-3zM702 508h1v3h-1zM719 509h3v1h-3zM720 508h1v3h-1zM736 509h3v1h-3zM737 508h1v3h-1zM754 509h3v1h-3zM755 508h1v3h-1zM772 509h3v1h-3zM773 508h1v3h-1zM789 509h3v1h-3zM790 508h1v3h-1zM807 509h3v1h-3zM808 508h1v3h-1zM825 509h3v1h-3zM826 508h1v3h-1zM842 509h3v1h-3zM843 508h1v3h-1zM860 509h3v1h-3zM861 508h1v3h-1zM877 509h3v1h-3zM878 508h1v3h-1zM895 509h3v1h-3zM896 508h1v3h-1zM913 509h3v1h-3zM914 508h1v3h-1zM930 509h3v1h-3zM931 508h1v3h-1zM948 509h3v1h-3zM949 508h1v3h-1zM966 509h3v1h-3zM967 508h1v3h-1zM983 509h3v1h-3zM984 508h1v3h-1zM1001 509h3v1h-3zM1002 508h1v3h-1zM1019 509h3v1h-3zM1020 508h1v3h-1zM1036 509h3v1h-3zM1037 508h1v3h-1zM1054 509h3v1h-3zM1055 508h1v3h-1zM1072 509h3v1h-3zM1073 508h1v3h-1zM1089 509h3v1h-3zM1090 508h1v3h-1zM1107 509h3v1h-3zM1108 508h1v3h-1zM1124 509h3v1h-3zM1125 508h1v3h-1zM1142 509h3v1h-3zM1143 508h1v3h-1zM1160 509h3v1h-3zM1161 508h1v3h-1zM1177 509h3v1h-3zM1178 508h1v3h-1zM1195 509h3v1h-3zM1196 508h1v3h-1zM1213 509h3v1h-3zM1214 508h1v3h-1zM1230 509h3v1h-3zM1231 508h1v3h-1zM1248 509h3v1h-3zM1249 508h1v3h-1zM1266 509h3v1h-3zM1267 508h1v3h-1zM189 527h3v1h-3zM190 526h1v3h-1zM207 527h3v1h-3zM208 526h1v3h-1zM225 527h3v1h-3zM226 526h1v3h-1zM242 527h3v1h-3zM243 526h1v3h-1zM260 527h3v1h-3zM261 526h1v3h-1zM278 527h3v1h-3zM279 526h1v3h-1zM295 527h3v1h-3zM296 526h1v3h-1zM313 527h3v1h-3zM314 526h1v3h-1zM330 527h3v1h-3zM331 526h1v3h-1zM348 527h3v1h-3zM349 526h1v3h-1zM366 527h3v1h-3zM367 526h1v3h-1zM383 527h3v1h-3zM384 526h1v3h-1zM401 527h3v1h-3zM402 526h1v3h-1zM419 527h3v1h-3zM420 526h1v3h-1zM436 527h3v1h-3zM437 526h1v3h-1zM454 527h3v1h-3zM455 526h1v3h-1zM472 527h3v1h-3zM473 526h1v3h-1zM489 527h3v1h-3zM490 526h1v3h-1zM507 527h3v1h-3zM508 526h1v3h-1zM525 527h3v1h-3zM526 526h1v3h-1zM542 527h3v1h-3zM543 526h1v3h-1zM560 527h3v1h-3zM561 526h1v3h-1zM578 527h3v1h-3zM579 526h1v3h-1zM595 527h3v1h-3zM596 526h1v3h-1zM613 527h3v1h-3zM614 526h1v3h-1zM630 527h3v1h-3zM631 526h1v3h-1zM648 527h3v1h-3zM649 526h1v3h-1zM666 527h3v1h-3zM667 526h1v3h-1zM683 527h3v1h-3zM684 526h1v3h-1zM701 527h3v1h-3zM702 526h1v3h-1zM719 527h3v1h-3zM720 526h1v3h-1zM736 527h3v1h-3zM737 526h1v3h-1zM754 527h3v1h-3zM755 526h1v3h-1zM772 527h3v1h-3zM773 526h1v3h-1zM789 527h3v1h-3zM790 526h1v3h-1zM807 527h3v1h-3zM808 526h1v3h-1zM825 527h3v1h-3zM826 526h1v3h-1zM842 527h3v1h-3zM843 526h1v3h-1zM860 527h3v1h-3zM861 526h1v3h-1zM877 527h3v1h-3zM878 526h1v3h-1zM895 527h3v1h-3zM896 526h1v3h-1zM913 527h3v1h-3zM914 526h1v3h-1zM930 527h3v1h-3zM931 526h1v3h-1zM948 527h3v1h-3zM949 526h1v3h-1zM966 527h3v1h-3zM967 526h1v3h-1zM983 527h3v1h-3zM984 526h1v3h-1zM1001 527h3v1h-3zM1002 526h1v3h-1zM1019 527h3v1h-3zM1020 526h1v3h-1zM1036 527h3v1h-3zM1037 526h1v3h-1zM1054 527h3v1h-3zM1055 526h1v3h-1zM1072 527h3v1h-3zM1073 526h1v3h-1zM1089 527h3v1h-3zM1090 526h1v3h-1zM1107 527h3v1h-3zM1108 526h1v3h-1zM1124 527h3v1h-3zM1125 526h1v3h-1zM1142 527h3v1h-3zM1143 526h1v3h-1zM1160 527h3v1h-3zM1161 526h1v3h-1zM1177 527h3v1h-3zM1178 526h1v3h-1zM1195 527h3v1h-3zM1196 526h1v3h-1zM1213 527h3v1h-3zM1214 526h1v3h-1zM1230 527h3v1h-3zM1231 526h1v3h-1zM1248 527h3v1h-3zM1249 526h1v3h-1zM1266 527h3v1h-3zM1267 526h1v3h-1zM189 545h3v1h-3zM190 544h1v3h-1zM207 545h3v1h-3zM208 544h1v3h-1zM225 545h3v1h-3zM226 544h1v3h-1zM242 545h3v1h-3zM243 544h1v3h-1zM260 545h3v1h-3zM261 544h1v3h-1zM278 545h3v1h-3zM279 544h1v3h-1zM295 545h3v1h-3zM296 544h1v3h-1zM313 545h3v1h-3zM314 544h1v3h-1zM330 545h3v1h-3zM331 544h1v3h-1zM348 545h3v1h-3zM349 544h1v3h-1zM366 545h3v1h-3zM367 544h1v3h-1zM383 545h3v1h-3zM384 544h1v3h-1zM401 545h3v1h-3zM402 544h1v3h-1zM419 545h3v1h-3zM420 544h1v3h-1zM436 545h3v1h-3zM437 544h1v3h-1zM454 545h3v1h-3zM455 544h1v3h-1zM472 545h3v1h-3zM473 544h1v3h-1zM489 545h3v1h-3zM490 544h1v3h-1zM507 545h3v1h-3zM508 544h1v3h-1zM525 545h3v1h-3zM526 544h1v3h-1zM542 545h3v1h-3zM543 544h1v3h-1zM560 545h3v1h-3zM561 544h1v3h-1zM578 545h3v1h-3zM579 544h1v3h-1zM595 545h3v1h-3zM596 544h1v3h-1zM613 545h3v1h-3zM614 544h1v3h-1zM630 545h3v1h-3zM631 544h1v3h-1zM648 545h3v1h-3zM649 544h1v3h-1zM666 545h3v1h-3zM667 544h1v3h-1zM683 545h3v1h-3zM684 544h1v3h-1zM701 545h3v1h-3zM702 544h1v3h-1zM719 545h3v1h-3zM720 544h1v3h-1zM736 545h3v1h-3zM737 544h1v3h-1zM754 545h3v1h-3zM755 544h1v3h-1zM772 545h3v1h-3zM773 544h1v3h-1zM789 545h3v1h-3zM790 544h1v3h-1zM807 545h3v1h-3zM808 544h1v3h-1zM825 545h3v1h-3zM826 544h1v3h-1zM842 545h3v1h-3zM843 544h1v3h-1zM860 545h3v1h-3zM861 544h1v3h-1zM877 545h3v1h-3zM878 544h1v3h-1zM895 545h3v1h-3zM896 544h1v3h-1zM913 545h3v1h-3zM914 544h1v3h-1zM930 545h3v1h-3zM931 544h1v3h-1zM948 545h3v1h-3zM949 544h1v3h-1zM966 545h3v1h-3zM967 544h1v3h-1zM983 545h3v1h-3zM984 544h1v3h-1zM1001 545h3v1h-3zM1002 544h1v3h-1zM1019 545h3v1h-3zM1020 544h1v3h-1zM1036 545h3v1h-3zM1037 544h1v3h-1zM1054 545h3v1h-3zM1055 544h1v3h-1zM1072 545h3v1h-3zM1073 544h1v3h-1zM1089 545h3v1h-3zM1090 544h1v3h-1zM1107 545h3v1h-3zM1108 544h1v3h-1zM1124 545h3v1h-3zM1125 544h1v3h-1zM1142 545h3v1h-3zM1143 544h1v3h-1zM1160 545h3v1h-3zM1161 544h1v3h-1zM1177 545h3v1h-3zM1178 544h1v3h-1zM1195 545h3v1h-3zM1196 544h1v3h-1zM1213 545h3v1h-3zM1214 544h1v3h-1zM1230 545h3v1h-3zM1231 544h1v3h-1zM1248 545h3v1h-3zM1249 544h1v3h-1zM1266 545h3v1h-3zM1267 544h1v3h-1zM189 562h3v1h-3zM190 561h1v3h-1zM207 562h3v1h-3zM208 561h1v3h-1zM225 562h3v1h-3zM226 561h1v3h-1zM242 562h3v1h-3zM243 561h1v3h-1zM260 562h3v1h-3zM261 561h1v3h-1zM278 562h3v1h-3zM279 561h1v3h-1zM295 562h3v1h-3zM296 561h1v3h-1zM313 562h3v1h-3zM314 561h1v3h-1zM330 562h3v1h-3zM331 561h1v3h-1zM348 562h3v1h-3zM349 561h1v3h-1zM366 562h3v1h-3zM367 561h1v3h-1zM383 562h3v1h-3zM384 561h1v3h-1zM401 562h3v1h-3zM402 561h1v3h-1zM419 562h3v1h-3zM420 561h1v3h-1zM436 562h3v1h-3zM437 561h1v3h-1zM454 562h3v1h-3zM455 561h1v3h-1zM472 562h3v1h-3zM473 561h1v3h-1zM489 562h3v1h-3zM490 561h1v3h-1zM507 562h3v1h-3zM508 561h1v3h-1zM525 562h3v1h-3zM526 561h1v3h-1zM542 562h3v1h-3zM543 561h1v3h-1zM560 562h3v1h-3zM561 561h1v3h-1zM578 562h3v1h-3zM579 561h1v3h-1zM595 562h3v1h-3zM596 561h1v3h-1zM613 562h3v1h-3zM614 561h1v3h-1zM630 562h3v1h-3zM631 561h1v3h-1zM648 562h3v1h-3zM649 561h1v3h-1zM666 562h3v1h-3zM667 561h1v3h-1zM683 562h3v1h-3zM684 561h1v3h-1zM701 562h3v1h-3zM702 561h1v3h-1zM719 562h3v1h-3zM720 561h1v3h-1zM736 562h3v1h-3zM737 561h1v3h-1zM754 562h3v1h-3zM755 561h1v3h-1zM772 562h3v1h-3zM773 561h1v3h-1zM789 562h3v1h-3zM790 561h1v3h-1zM807 562h3v1h-3zM808 561h1v3h-1zM825 562h3v1h-3zM826 561h1v3h-1zM842 562h3v1h-3zM843 561h1v3h-1zM860 562h3v1h-3zM861 561h1v3h-1zM877 562h3v1h-3zM878 561h1v3h-1zM895 562h3v1h-3zM896 561h1v3h-1zM913 562h3v1h-3zM914 561h1v3h-1zM930 562h3v1h-3zM931 561h1v3h-1zM948 562h3v1h-3zM949 561h1v3h-1zM966 562h3v1h-3zM967 561h1v3h-1zM983 562h3v1h-3zM984 561h1v3h-1zM1001 562h3v1h-3zM1002 561h1v3h-1zM1019 562h3v1h-3zM1020 561h1v3h-1zM1036 562h3v1h-3zM1037 561h1v3h-1zM1054 562h3v1h-3zM1055 561h1v3h-1zM1072 562h3v1h-3zM1073 561h1v3h-1zM1089 562h3v1h-3zM1090 561h1v3h-1zM1107 562h3v1h-3zM1108 561h1v3h-1zM1124 562h3v1h-3zM1125 561h1v3h-1zM1142 562h3v1h-3zM1143 561h1v3h-1zM1160 562h3v1h-3zM1161 561h1v3h-1zM1177 562h3v1h-3zM1178 561h1v3h-1zM1195 562h3v1h-3zM1196 561h1v3h-1zM1213 562h3v1h-3zM1214 561h1v3h-1zM1230 562h3v1h-3zM1231 561h1v3h-1zM1248 562h3v1h-3zM1249 561h1v3h-1zM1266 562h3v1h-3zM1267 561h1v3h-1zM189 580h3v1h-3zM190 579h1v3h-1zM207 580h3v1h-3zM208 579h1v3h-1zM225 580h3v1h-3zM226 579h1v3h-1zM242 580h3v1h-3zM243 579h1v3h-1zM260 580h3v1h-3zM261 579h1v3h-1zM278 580h3v1h-3zM279 579h1v3h-1zM295 580h3v1h-3zM296 579h1v3h-1zM313 580h3v1h-3zM314 579h1v3h-1zM330 580h3v1h-3zM331 579h1v3h-1zM348 580h3v1h-3zM349 579h1v3h-1zM366 580h3v1h-3zM367 579h1v3h-1zM383 580h3v1h-3zM384 579h1v3h-1zM401 580h3v1h-3zM402 579h1v3h-1zM419 580h3v1h-3zM420 579h1v3h-1zM436 580h3v1h-3zM437 579h1v3h-1zM454 580h3v1h-3zM455 579h1v3h-1zM472 580h3v1h-3zM473 579h1v3h-1zM489 580h3v1h-3zM490 579h1v3h-1zM507 580h3v1h-3zM508 579h1v3h-1zM525 580h3v1h-3zM526 579h1v3h-1zM542 580h3v1h-3zM543 579h1v3h-1zM560 580h3v1h-3zM561 579h1v3h-1zM578 580h3v1h-3zM579 579h1v3h-1zM595 580h3v1h-3zM596 579h1v3h-1zM613 580h3v1h-3zM614 579h1v3h-1zM630 580h3v1h-3zM631 579h1v3h-1zM648 580h3v1h-3zM649 579h1v3h-1zM666 580h3v1h-3zM667 579h1v3h-1zM683 580h3v1h-3zM684 579h1v3h-1zM701 580h3v1h-3zM702 579h1v3h-1zM719 580h3v1h-3zM720 579h1v3h-1zM736 580h3v1h-3zM737 579h1v3h-1zM754 580h3v1h-3zM755 579h1v3h-1zM772 580h3v1h-3zM773 579h1v3h-1zM789 580h3v1h-3zM790 579h1v3h-1zM807 580h3v1h-3zM808 579h1v3h-1zM825 580h3v1h-3zM826 579h1v3h-1zM842 580h3v1h-3zM843 579h1v3h-1zM860 580h3v1h-3zM861 579h1v3h-1zM877 580h3v1h-3zM878 579h1v3h-1zM895 580h3v1h-3zM896 579h1v3h-1zM913 580h3v1h-3zM914 579h1v3h-1zM930 580h3v1h-3zM931 579h1v3h-1zM948 580h3v1h-3zM949 579h1v3h-1zM966 580h3v1h-3zM967 579h1v3h-1zM983 580h3v1h-3zM984 579h1v3h-1zM1001 580h3v1h-3zM1002 579h1v3h-1zM1019 580h3v1h-3zM1020 579h1v3h-1zM1036 580h3v1h-3zM1037 579h1v3h-1zM1054 580h3v1h-3zM1055 579h1v3h-1zM1072 580h3v1h-3zM1073 579h1v3h-1zM1089 580h3v1h-3zM1090 579h1v3h-1zM1107 580h3v1h-3zM1108 579h1v3h-1zM1124 580h3v1h-3zM1125 579h1v3h-1zM1142 580h3v1h-3zM1143 579h1v3h-1zM1160 580h3v1h-3zM1161 579h1v3h-1zM1177 580h3v1h-3zM1178 579h1v3h-1zM1195 580h3v1h-3zM1196 579h1v3h-1zM1213 580h3v1h-3zM1214 579h1v3h-1zM1230 580h3v1h-3zM1231 579h1v3h-1zM1248 580h3v1h-3zM1249 579h1v3h-1zM1266 580h3v1h-3zM1267 579h1v3h-1zM189 598h3v1h-3zM190 597h1v3h-1zM207 598h3v1h-3zM208 597h1v3h-1zM225 598h3v1h-3zM226 597h1v3h-1zM242 598h3v1h-3zM243 597h1v3h-1zM260 598h3v1h-3zM261 597h1v3h-1zM278 598h3v1h-3zM279 597h1v3h-1zM295 598h3v1h-3zM296 597h1v3h-1zM313 598h3v1h-3zM314 597h1v3h-1zM330 598h3v1h-3zM331 597h1v3h-1zM348 598h3v1h-3zM349 597h1v3h-1zM366 598h3v1h-3zM367 597h1v3h-1zM383 598h3v1h-3zM384 597h1v3h-1zM401 598h3v1h-3zM402 597h1v3h-1zM419 598h3v1h-3zM420 597h1v3h-1zM436 598h3v1h-3zM437 597h1v3h-1zM454 598h3v1h-3zM455 597h1v3h-1zM472 598h3v1h-3zM473 597h1v3h-1zM489 598h3v1h-3zM490 597h1v3h-1zM507 598h3v1h-3zM508 597h1v3h-1zM525 598h3v1h-3zM526 597h1v3h-1zM542 598h3v1h-3zM543 597h1v3h-1zM560 598h3v1h-3zM561 597h1v3h-1zM578 598h3v1h-3zM579 597h1v3h-1zM595 598h3v1h-3zM596 597h1v3h-1zM613 598h3v1h-3zM614 597h1v3h-1zM630 598h3v1h-3zM631 597h1v3h-1zM648 598h3v1h-3zM649 597h1v3h-1zM666 598h3v1h-3zM667 597h1v3h-1zM683 598h3v1h-3zM684 597h1v3h-1zM701 598h3v1h-3zM702 597h1v3h-1zM719 598h3v1h-3zM720 597h1v3h-1zM736 598h3v1h-3zM737 597h1v3h-1zM754 598h3v1h-3zM755 597h1v3h-1zM772 598h3v1h-3zM773 597h1v3h-1zM789 598h3v1h-3zM790 597h1v3h-1zM807 598h3v1h-3zM808 597h1v3h-1zM825 598h3v1h-3zM826 597h1v3h-1zM842 598h3v1h-3zM843 597h1v3h-1zM860 598h3v1h-3zM861 597h1v3h-1zM877 598h3v1h-3zM878 597h1v3h-1zM895 598h3v1h-3zM896 597h1v3h-1zM913 598h3v1h-3zM914 597h1v3h-1zM930 598h3v1h-3zM931 597h1v3h-1zM948 598h3v1h-3zM949 597h1v3h-1zM966 598h3v1h-3zM967 597h1v3h-1zM983 598h3v1h-3zM984 597h1v3h-1zM1001 598h3v1h-3zM1002 597h1v3h-1zM1019 598h3v1h-3zM1020 597h1v3h-1zM1036 598h3v1h-3zM1037 597h1v3h-1zM1054 598h3v1h-3zM1055 597h1v3h-1zM1072 598h3v1h-3zM1073 597h1v3h-1zM1089 598h3v1h-3zM1090 597h1v3h-1zM1107 598h3v1h-3zM1108 597h1v3h-1zM1124 598h3v1h-3zM1125 597h1v3h-1zM1142 598h3v1h-3zM1143 597h1v3h-1zM1160 598h3v1h-3zM1161 597h1v3h-1zM1177 598h3v1h-3zM1178 597h1v3h-1zM1195 598h3v1h-3zM1196 597h1v3h-1zM1213 598h3v1h-3zM1214 597h1v3h-1zM1230 598h3v1h-3zM1231 597h1v3h-1zM1248 598h3v1h-3zM1249 597h1v3h-1zM1266 598h3v1h-3zM1267 597h1v3h-1zM189 615h3v1h-3zM190 614h1v3h-1zM207 615h3v1h-3zM208 614h1v3h-1zM225 615h3v1h-3zM226 614h1v3h-1zM242 615h3v1h-3zM243 614h1v3h-1zM260 615h3v1h-3zM261 614h1v3h-1zM278 615h3v1h-3zM279 614h1v3h-1zM295 615h3v1h-3zM296 614h1v3h-1zM313 615h3v1h-3zM314 614h1v3h-1zM330 615h3v1h-3zM331 614h1v3h-1zM348 615h3v1h-3zM349 614h1v3h-1zM366 615h3v1h-3zM367 614h1v3h-1zM383 615h3v1h-3zM384 614h1v3h-1zM401 615h3v1h-3zM402 614h1v3h-1zM419 615h3v1h-3zM420 614h1v3h-1zM436 615h3v1h-3zM437 614h1v3h-1zM454 615h3v1h-3zM455 614h1v3h-1zM472 615h3v1h-3zM473 614h1v3h-1zM489 615h3v1h-3zM490 614h1v3h-1zM507 615h3v1h-3zM508 614h1v3h-1zM525 615h3v1h-3zM526 614h1v3h-1zM542 615h3v1h-3zM543 614h1v3h-1zM560 615h3v1h-3zM561 614h1v3h-1zM578 615h3v1h-3zM579 614h1v3h-1zM595 615h3v1h-3zM596 614h1v3h-1zM613 615h3v1h-3zM614 614h1v3h-1zM630 615h3v1h-3zM631 614h1v3h-1zM648 615h3v1h-3zM649 614h1v3h-1zM666 615h3v1h-3zM667 614h1v3h-1zM683 615h3v1h-3zM684 614h1v3h-1zM701 615h3v1h-3zM702 614h1v3h-1zM719 615h3v1h-3zM720 614h1v3h-1zM736 615h3v1h-3zM737 614h1v3h-1zM754 615h3v1h-3zM755 614h1v3h-1zM772 615h3v1h-3zM773 614h1v3h-1zM789 615h3v1h-3zM790 614h1v3h-1zM807 615h3v1h-3zM808 614h1v3h-1zM825 615h3v1h-3zM826 614h1v3h-1zM842 615h3v1h-3zM843 614h1v3h-1zM860 615h3v1h-3zM861 614h1v3h-1zM877 615h3v1h-3zM878 614h1v3h-1zM895 615h3v1h-3zM896 614h1v3h-1zM913 615h3v1h-3zM914 614h1v3h-1zM930 615h3v1h-3zM931 614h1v3h-1zM948 615h3v1h-3zM949 614h1v3h-1zM966 615h3v1h-3zM967 614h1v3h-1zM983 615h3v1h-3zM984 614h1v3h-1zM1001 615h3v1h-3zM1002 614h1v3h-1zM1019 615h3v1h-3zM1020 614h1v3h-1zM1036 615h3v1h-3zM1037 614h1v3h-1zM1054 615h3v1h-3zM1055 614h1v3h-1zM1072 615h3v1h-3zM1073 614h1v3h-1zM1089 615h3v1h-3zM1090 614h1v3h-1zM1107 615h3v1h-3zM1108 614h1v3h-1zM1124 615h3v1h-3zM1125 614h1v3h-1zM1142 615h3v1h-3zM1143 614h1v3h-1zM1160 615h3v1h-3zM1161 614h1v3h-1zM1177 615h3v1h-3zM1178 614h1v3h-1zM1195 615h3v1h-3zM1196 614h1v3h-1zM1213 615h3v1h-3zM1214 614h1v3h-1zM1230 615h3v1h-3zM1231 614h1v3h-1zM1248 615h3v1h-3zM1249 614h1v3h-1zM1266 615h3v1h-3zM1267 614h1v3h-1z" fill="#ffffff" shape-rendering="crispEdges"/>
<rect x="180" y="209" width="1097" height="1" fill="#f0f0f0"/>
<rect x="596" y="125" width="1" height="504" fill="#f0f0f0"/>
<rect x="1271.5" y="563.5" width="4" height="4" fill="none" stroke="#e8e070" stroke-width="1"/>
<rect x="0" y="629" width="1278" height="3" fill="#d2d2d6"/>
<rect x="0" y="629" width="1278" height="1" fill="#bcbcc0"/>
<rect x="0" y="632" width="1278" height="326" fill="#f0f0f0"/>
<rect x="0" y="632" width="2" height="287" fill="#c8c8cc"/>
<rect x="1" y="632" width="1" height="287" fill="#a8a8ac"/>
<rect x="2" y="632" width="1276" height="31" fill="#ffffff"/>
<rect x="11" y="640" width="14" height="14" fill="#fff" stroke="#000" stroke-width="2"/>
<path d="M20.5 644.5 Q17 643.5 16.5 647 Q16.5 651 20.5 650.5" fill="none" stroke="#000" stroke-width="2"/>
<rect x="15.5" y="639" width="5" height="2" fill="#d83030"/>
<text x="31.00" y="653.00" font-family="Liberation Sans" font-size="12.00" fill="#80808c" letter-spacing="0.076">Virtuoso® 6.1.8-64b - Log: /home/lordm1/CDS.log</text>
<path d="M1161.5 647.5 H1171.5" stroke="#555" stroke-width="1"/>
<rect x="1207.5" y="642.5" width="9" height="9" fill="none" stroke="#555" stroke-width="1"/>
<path d="M1253.5 642.5 L1263.5 652.5 M1263.5 642.5 L1253.5 652.5" stroke="#555" stroke-width="1"/>
<rect x="2" y="663" width="1276" height="1" fill="#d6d6d6"/>
<rect x="2" y="664" width="1276" height="22" fill="#f0f0f0"/>
<rect x="2" y="664" width="1276" height="2" fill="#e2e2e2"/>
<text x="11.50" y="680.00" font-family="Liberation Sans" font-size="11.50" fill="#1e1e1e" letter-spacing="-0.258">File</text>
<rect x="11.5" y="682" width="6.1" height="1" fill="#1e1e1e"/>
<text x="41.00" y="680.00" font-family="Liberation Sans" font-size="11.50" fill="#1e1e1e" letter-spacing="0.231">Tools</text>
<rect x="41.0" y="682" width="6.8" height="1" fill="#1e1e1e"/>
<text x="81.00" y="680.00" font-family="Liberation Sans" font-size="11.50" fill="#1e1e1e" letter-spacing="0.195">Options</text>
<rect x="81.0" y="682" width="8.8" height="1" fill="#1e1e1e"/>
<text x="134.00" y="680.00" font-family="Liberation Sans" font-size="11.50" fill="#1e1e1e" letter-spacing="-0.038">Help</text>
<rect x="134.0" y="682" width="7.8" height="1" fill="#1e1e1e"/>
<text transform="translate(1201.20,682.60) scale(0.66,1)" font-family="Liberation Sans" font-weight="bold" font-size="18.2" fill="#1c1c1c">c</text>
<text transform="translate(1210.60,682.60) scale(0.66,1)" font-family="Liberation Sans" font-weight="bold" font-size="18.2" fill="#1c1c1c">a</text>
<text transform="translate(1222.10,682.60) scale(0.66,1)" font-family="Liberation Sans" font-weight="bold" font-size="18.2" fill="#1c1c1c">d</text>
<text transform="translate(1233.40,682.60) scale(0.66,1)" font-family="Liberation Sans" font-weight="bold" font-size="18.2" fill="#1c1c1c">e</text>
<text transform="translate(1244.60,682.60) scale(0.66,1)" font-family="Liberation Sans" font-weight="bold" font-size="18.2" fill="#1c1c1c">n</text>
<text transform="translate(1256.60,682.60) scale(0.66,1)" font-family="Liberation Sans" font-weight="bold" font-size="18.2" fill="#1c1c1c">c</text>
<text transform="translate(1266.60,682.60) scale(0.66,1)" font-family="Liberation Sans" font-weight="bold" font-size="18.2" fill="#1c1c1c">e</text>
<rect x="1211.6" y="669.2" width="5.5" height="1.4" fill="#b84848"/>
<rect x="2" y="685" width="1276" height="2" fill="#fbe4e4"/>
<rect x="2" y="687" width="1276" height="1" fill="#9a0000"/>
<rect x="2" y="688" width="1276" height="3" fill="#c00000"/>
<rect x="2" y="691" width="1276" height="2" fill="#fbe4e4"/>
<rect x="2" y="695" width="1276" height="2" fill="#1a1a1a"/>
<rect x="3" y="697" width="1275" height="182" fill="#ffffff"/>
<rect x="3" y="697" width="1" height="182" fill="#1a1a1a"/>
<text x="8.2" y="708" font-family="Liberation Mono" font-size="11" fill="#111" xml:space="preserve">Rules come from library NCSU_TechLib_ami06.</text>
<text x="8.2" y="722" font-family="Liberation Mono" font-size="11" fill="#111" xml:space="preserve">Rules path is divaDRC.rul.</text>
<text x="8.2" y="736" font-family="Liberation Mono" font-size="11" fill="#111" xml:space="preserve">Inclusion limit is set to 1000.</text>
<text x="8.2" y="750" font-family="Liberation Mono" font-size="11" fill="#111" xml:space="preserve">Running layout DRC analysis</text>
<text x="8.2" y="764" font-family="Liberation Mono" font-size="11" fill="#111" xml:space="preserve">Flat mode</text>
<text x="8.2" y="778" font-family="Liberation Mono" font-size="11" fill="#111" xml:space="preserve">Full checking.</text>
<text x="8.2" y="792" font-family="Liberation Mono" font-size="11" fill="#111" xml:space="preserve">DRC started.......Wed Sep 27 01:07:22 2023</text>
<text x="8.2" y="806" font-family="Liberation Mono" font-size="11" fill="#111" xml:space="preserve">    completed ....Wed Sep 27 01:07:22 2023</text>
<text x="8.2" y="820" font-family="Liberation Mono" font-size="11" fill="#111" xml:space="preserve">    CPU TIME = 00:00:00  TOTAL TIME = 00:00:00</text>
<text x="8.2" y="834" font-family="Liberation Mono" font-size="11" fill="#111" xml:space="preserve">*********   Summary of rule violations for cell &quot;ProbePads_PMOS_IV layout&quot;   *********</text>
<text x="8.2" y="848" font-family="Liberation Mono" font-size="11" fill="#111" xml:space="preserve">   Total errors found: 0</text>
<rect x="1263" y="697" width="15" height="182" fill="#9a9a9a"/>
<rect x="1263.5" y="697.5" width="14" height="15" fill="url(#gBtn)" stroke="#c0c0c0"/>
<path d="M1266.5 708.5 L1270.5 703 L1274.5 708.5 Z" fill="none" stroke="#fff" stroke-width="1.2"/>
<rect x="1264" y="842.5" width="13.5" height="22" rx="7" fill="url(#gScroll)" stroke="#b0b0b0"/>
<rect x="1267" y="848" width="7" height="1" fill="#8a8a8a"/>
<rect x="1267" y="850" width="7" height="1" fill="#8a8a8a"/>
<rect x="1267" y="852" width="7" height="1" fill="#8a8a8a"/>
<rect x="1267" y="854" width="7" height="1" fill="#8a8a8a"/>
<rect x="1263.5" y="864.5" width="14" height="14" fill="url(#gBtn)" stroke="#c0c0c0"/>
<path d="M1266.5 868 L1270.5 874 L1274.5 868 Z" fill="#fff"/>
<rect x="3" y="879" width="1275" height="8" fill="url(#gSplit)"/>
<rect x="3" y="879" width="1275" height="1" fill="#f8f8f8"/>
<rect x="3" y="887" width="1275" height="2" fill="#111111"/>
<rect x="3" y="889" width="1275" height="14" fill="#ffffff"/>
<rect x="3" y="889" width="1" height="14" fill="#1a1a1a"/>
<path d="M1266 897 L1270.5 892 L1275 897 Z" fill="none" stroke="#c8c8c8"/><path d="M1266 898 L1270.5 903 L1275 898 Z" fill="none" stroke="#c8c8c8"/>
<rect x="3" y="903" width="1260" height="15" fill="#ececec"/>
<rect x="4.5" y="903.5" width="15" height="14" fill="url(#gBtn)" stroke="#d0d0d0"/>
<path d="M15 906.5 L9 910.5 L15 914.5 Z" fill="none" stroke="#fff" stroke-width="1.2"/>
<rect x="20.5" y="904.5" width="1226" height="13" rx="6.5" fill="#bcbcbc" stroke="#b0b0b0"/>
<rect x="1247.5" y="903.5" width="15" height="14" fill="url(#gBtn)" stroke="#d0d0d0"/>
<path d="M1252 906.5 L1258 910.5 L1252 914.5 Z" fill="none" stroke="#fff" stroke-width="1.2"/>
<rect x="629" y="907" width="1" height="7" fill="#9a9a9a"/>
<rect x="631" y="907" width="1" height="7" fill="#9a9a9a"/>
<rect x="633" y="907" width="1" height="7" fill="#9a9a9a"/>
<rect x="635" y="907" width="1" height="7" fill="#9a9a9a"/>
<rect x="637" y="907" width="1" height="7" fill="#9a9a9a"/>
<rect x="3" y="918" width="1275" height="21" fill="url(#gStat)"/>
<rect x="3" y="938" width="1275" height="1" fill="#b8b8b8"/>
<rect x="6" y="923" width="1" height="11" fill="#8a8a8a"/>
<rect x="8" y="923" width="1" height="11" fill="#8a8a8a"/>
<rect x="10" y="923" width="1" height="11" fill="#8a8a8a"/>
<text x="12.50" y="933.00" font-family="Liberation Sans" font-size="11.50" fill="#1e1e1e" letter-spacing="-0.088">mouse L: showClickInfo()</text>
<text x="599.50" y="933.00" font-family="Liberation Sans" font-size="11.50" fill="#1e1e1e" letter-spacing="-0.314">M: setDRCForm()</text>
<text x="1160.00" y="933.00" font-family="Liberation Sans" font-size="11.50" fill="#1e1e1e" letter-spacing="-0.230">R: _lxHiMousePopUp()</text>
<rect x="3" y="939" width="1275" height="19" fill="#f0f0f0"/>
<text x="5.00" y="954.00" font-family="Liberation Sans" font-size="11.50" fill="#1e1e1e">1</text>
<rect x="17" y="940" width="1" height="18" fill="#333"/>
<text x="29.00" y="954.00" font-family="Liberation Sans" font-size="11.50" fill="#333">&gt;</text>
<rect x="1267.5" y="943.5" width="6" height="14" fill="#9a9aa0" stroke="#555"/>
<rect x="1276" y="940" width="1" height="18" fill="#333"/>
</svg></body></html>
